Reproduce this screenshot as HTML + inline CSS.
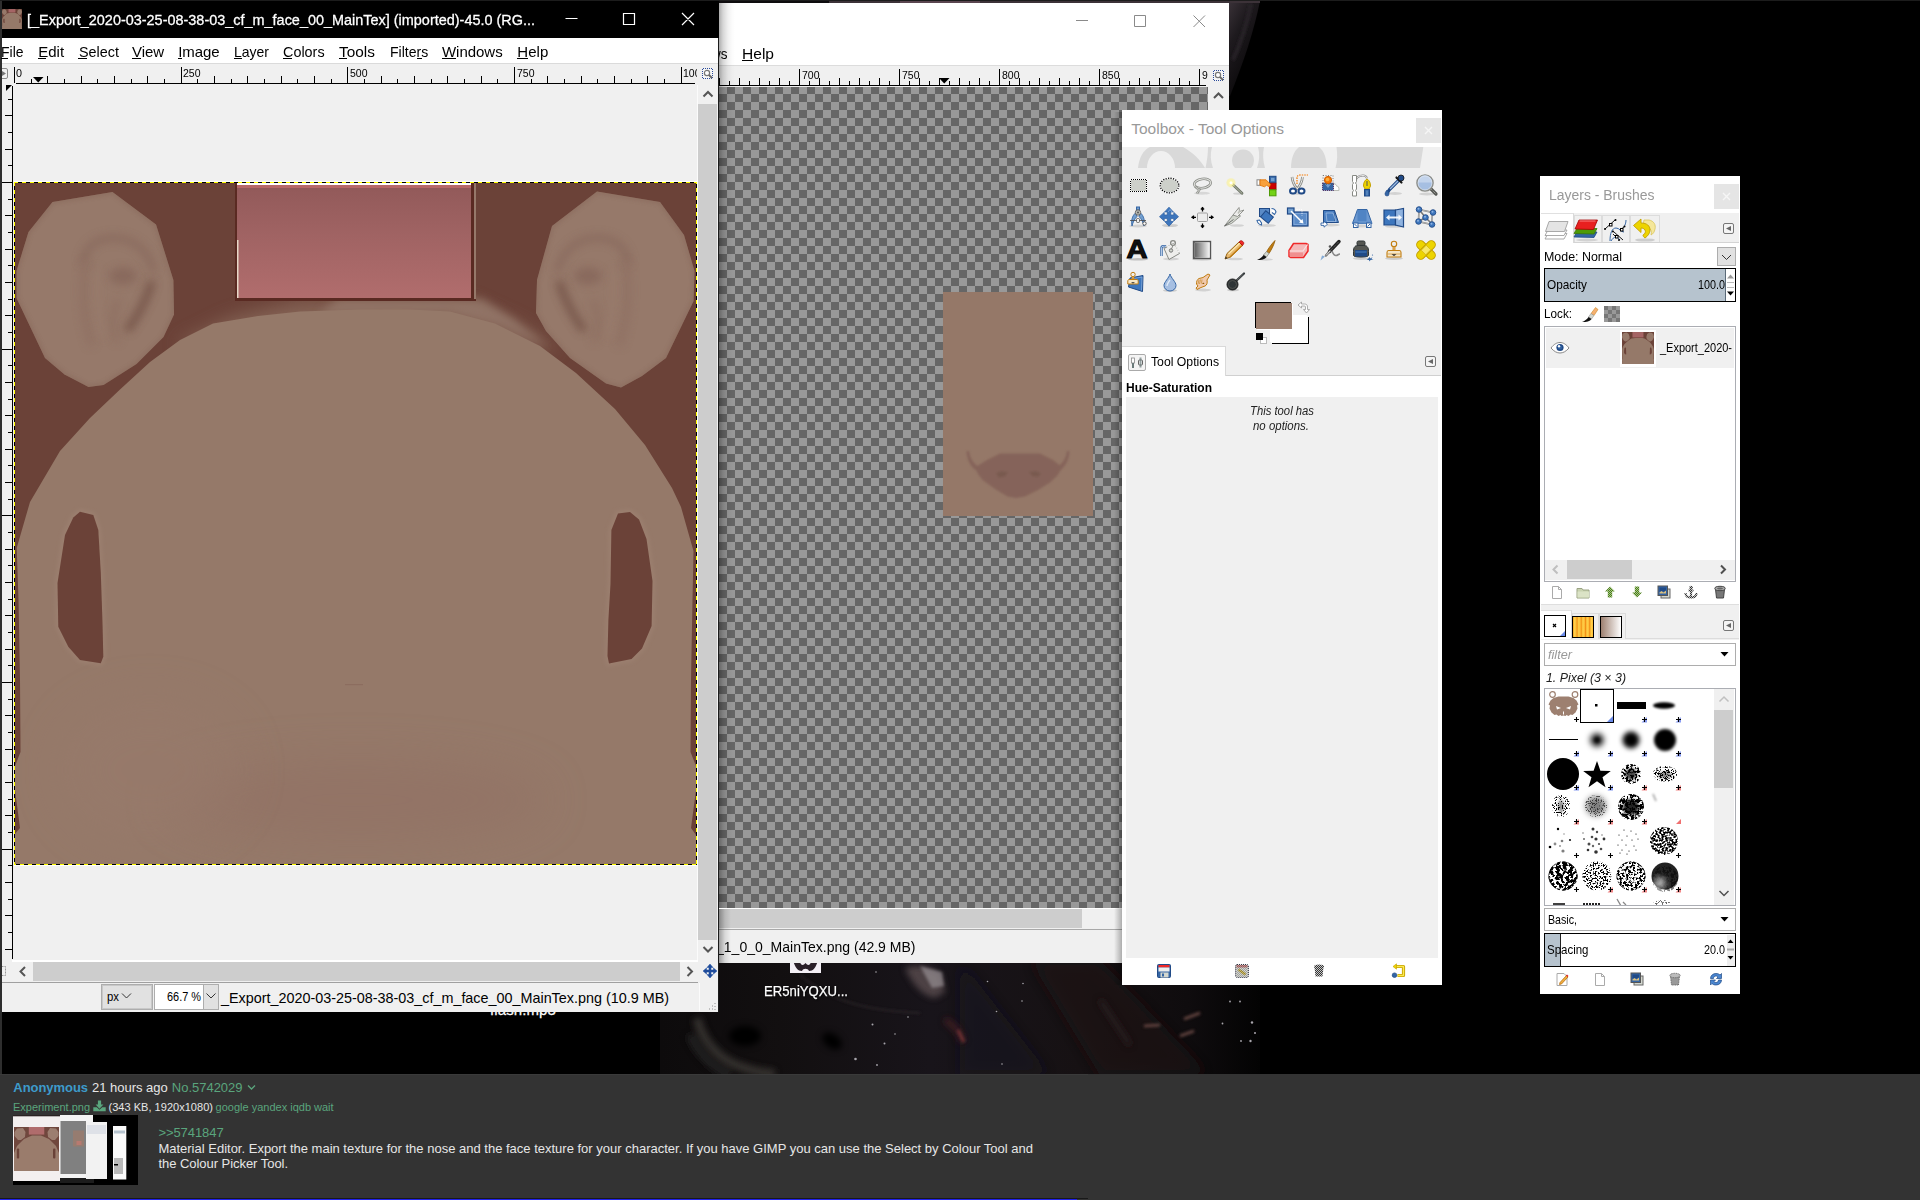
<!DOCTYPE html>
<html lang="en"><head><meta charset="utf-8"><title>Experiment.png</title><style>html,body{margin:0;padding:0;background:#000}
body{width:1920px;height:1200px;position:relative;overflow:hidden;font-family:"Liberation Sans",sans-serif}
.a{position:absolute;display:block}
.t{position:absolute;white-space:pre;line-height:1;transform-origin:0 0;display:block}
</style></head><body><svg width="0" height="0" style="position:absolute"><defs><g id="facemini"><path d="M14,866 L14,835 L20,828 L15,790 L15,766 L20.5,752 L20,680 L18.5,600 L16.7,548 L30,502 L60,451 L90,418 L120,389.5 L150,362 L180,340 L213,323.5 L258,316 L300,311.5 L360,309.5 L410,309.5 L450,311.5 L495,323.5 L540,346 L576,373 L615,409 L645,445 L672,488 L681,507 L693.5,551 L692.5,600 L691,680 L690.5,752 L696,766 L696,790 L691,828 L696,835 L697,866 Z" fill="#957969"/><polygon points="112.5,192 52.5,202 28.5,232 16.5,271 16.5,298 45,358 64.5,374.5 88.5,387 103.5,385 136.5,364 163.5,337 174,314.5 173.4,280 156,224.5 144,215.5" fill="#96796a"/><polygon points="597,191.5 660,202 684,235 694.5,271 693.6,301 666,358 642,376 621,387.4 606,383.5 570,358 546,331 536,313 537,280 552,226" fill="#96796a"/><polygon points="80,511.7 93.3,515 98.3,530 100.8,573 102.5,623 103.3,656.7 100.8,663.3 80,660 68.3,646.7 58.3,626.7 57.5,583 65,535 73.3,517.5" fill="#6b4238"/><polygon points="618,513.5 630,512 639,519.5 646.5,539 652.5,581 651.6,626 642,648.5 631.5,659 609,663.5 607.5,656 608.4,620 610.5,584 611.4,530" fill="#6b4238"/><rect x="237" y="183" width="236" height="116" fill="#a56565"/></g></defs></svg>
<!-- desk --><div class="a" style="left:0px;top:0px;width:2px;height:1074px;background:#2e2e2e;"></div><div class="a" style="left:0px;top:0px;width:1920px;height:1px;background:#1c1c1c;"></div><svg class="a" style="left:660px;top:1px;" width="600" height="1074" viewBox="660 1 600 1074"><defs><filter id="wb" x="-20%" y="-20%" width="140%" height="140%"><feGaussianBlur stdDeviation="3"/></filter><filter id="wb2" x="-20%" y="-20%" width="140%" height="140%"><feGaussianBlur stdDeviation="1.5"/></filter><filter id="wb3" x="-20%" y="-20%" width="140%" height="140%"><feGaussianBlur stdDeviation="8"/></filter><linearGradient id="wg" x1="0" y1="0" x2="1" y2="0"><stop offset="0" stop-color="#0d0b0c"/><stop offset="0.2" stop-color="#120f10"/><stop offset="0.45" stop-color="#18141a"/><stop offset="0.7" stop-color="#161113"/><stop offset="0.88" stop-color="#0f0c0e"/><stop offset="1" stop-color="#030303"/></linearGradient></defs><rect x="660" y="940" width="600" height="135" fill="url(#wg)"/><linearGradient id="wt" x1="0" y1="0" x2="0.6" y2="1"><stop offset="0" stop-color="#3a3238"/><stop offset="0.35" stop-color="#1e1a1e"/><stop offset="1" stop-color="#050405"/></linearGradient><path d="M1229,1h31c-6,30 -16,60 -30,95h-1z" fill="url(#wt)"/><path d="M1233,60c8,-18 14,-36 18,-56" stroke="#2c262c" stroke-width="3" fill="none" filter="url(#wb2)"/><g filter="url(#wb3)"><path d="M960,960l90,115h-90z" fill="#1a1a24" opacity="0.5"/><path d="M1030,960h70l110,115h-110z" fill="#1a1517" opacity="0.6"/></g><g filter="url(#wb)"><path d="M697,1018c5,22 20,40 42,48c12,5 24,7 36,8" stroke="#3a3533" stroke-width="9" fill="none" opacity="0.85"/><path d="M690,1035c8,18 22,32 40,40" stroke="#242021" stroke-width="8" fill="none"/><ellipse cx="832" cy="1041" rx="11" ry="7" fill="#000" transform="rotate(35 832 1041)"/><ellipse cx="745" cy="1036" rx="16" ry="10" fill="#060505"/><path d="M1100,1000l30,45" stroke="#2a2024" stroke-width="4" fill="none"/><path d="M905,968c12,-4 26,-2 36,6l4,18l-10,6c-12,-2 -22,-12 -30,-30z" fill="#5a4c50" opacity="0.8"/><path d="M945,1020c8,4 14,10 18,22" stroke="#4a2224" stroke-width="6" fill="none" opacity="0.8"/></g><g filter="url(#wb2)"><path d="M920,966l22,6l2,14l-12,2z" fill="#a49ca0" opacity="0.6"/><path d="M1144,1026l16,-1M1184,1019l16,-6M1180,1036l14,-5" stroke="#6a4a44" stroke-width="2.500"/><path d="M958,1030l6,12" stroke="#8a3a3a" stroke-width="3" opacity="0.7"/><path d="M800,975c30,25 60,35 120,38" stroke="#3a3236" stroke-width="1" fill="none"/></g><g fill="#a8a6ac"><circle cx="872.500" cy="1024.500" r="1"/><circle cx="855.500" cy="1059" r="1.300"/><circle cx="884.500" cy="1043.500" r="1"/><circle cx="895" cy="1034" r="0.800"/><circle cx="877" cy="1065" r="0.900"/><circle cx="987.500" cy="981.500" r="0.800"/><circle cx="1023" cy="983.500" r="0.800"/><circle cx="1022" cy="1001" r="0.800"/><circle cx="996.500" cy="1011.500" r="0.800"/><circle cx="1002" cy="1064" r="0.800"/><circle cx="1230" cy="1001.500" r="0.900"/><circle cx="1240" cy="1001.500" r="0.900"/><circle cx="1252" cy="1022.500" r="1.200"/><circle cx="1255" cy="1033" r="1"/><circle cx="1250.500" cy="1041" r="1.200"/><circle cx="1241" cy="1041" r="0.900"/><circle cx="1222.500" cy="1023.500" r="0.900"/><circle cx="876" cy="972" r="0.800"/><circle cx="908" cy="1017" r="0.800"/></g><path d="M719,1h541v2h-541z" fill="#3c3238"/><path d="M719,1h110v2h-110z" fill="#0e0c0e"/><path d="M900,1h80v2h-80z" fill="#5a4650"/></svg><div class="a" style="left:790px;top:960px;width:31px;height:13px;background:#f4f0f6;"></div><svg class="a" style="left:790px;top:960px;" width="31" height="13" viewBox="0 0 31 13"><path d="M3,0c2,8 5,11 9,11c1,-3 6,-3 7,0c4,0 7,-3 9,-11h-6c-2,6 -4,6 -6.500,3c-2.500,3 -4.500,3 -6.500,-3z" fill="#2a2028"/></svg><span class="t" style="left:764px;top:982.68px;font-size:15.5px;color:#fff;transform:scaleX(0.8479);-webkit-text-stroke:0.25px #fff;text-shadow:1px 1px 2px #000">ER5niYQXU...</span><span class="t" style="left:490px;top:1001.80px;font-size:15px;color:#fff;letter-spacing:0.106px;-webkit-text-stroke:0.25px #fff;">flash.mp3</span>
<!-- win1 --><div class="a" style="left:2px;top:1px;width:717px;height:1011px;background:#f0f0f0;"></div><div class="a" style="left:2px;top:1px;width:717px;height:37px;background:#000;"></div><div class="a" style="left:2px;top:38px;width:716px;height:25px;background:#fff;"></div><div class="a" style="left:2px;top:63px;width:716px;height:1px;background:#dadada;"></div><div class="a" style="left:718px;top:38px;width:1px;height:974px;background:#1b1b1b;"></div><svg class="a" style="left:2px;top:9px;" width="20" height="20" viewBox="14 182 684 685"><rect x="14" y="182" width="684" height="685" fill="#6b4238"/><use href="#facemini"/></svg><span class="t" style="left:27px;top:12.08px;font-size:15.5px;color:#fff;transform:scaleX(0.9315);-webkit-text-stroke:0.3px #fff;">[_Export_2020-03-25-08-38-03_cf_m_face_00_MainTex] (imported)-45.0 (RG...</span><svg class="a" style="left:560px;top:8px;" width="140" height="24" viewBox="0 0 140 24"><path d="M5.5,10.5h12M63.5,5.5h11v11h-11zM122,5l12,12M134,5l-12,12" stroke="#fff" stroke-width="1.2" fill="none"/></svg><span class="t" style="left:1px;top:43.70px;font-size:15px;color:#000;transform:scaleX(0.9308);">File</span><div class="a" style="left:1px;top:58px;width:7px;height:1px;background:#000;"></div><span class="t" style="left:38.2px;top:43.70px;font-size:15px;color:#000;letter-spacing:0.035px;">Edit</span><div class="a" style="left:38px;top:58px;width:8px;height:1px;background:#000;"></div><span class="t" style="left:78.5px;top:43.70px;font-size:15px;color:#000;transform:scaleX(0.9568);">Select</span><div class="a" style="left:78px;top:58px;width:9px;height:1px;background:#000;"></div><span class="t" style="left:132px;top:43.70px;font-size:15px;color:#000;letter-spacing:-0.062px;">View</span><div class="a" style="left:132px;top:58px;width:9px;height:1px;background:#000;"></div><span class="t" style="left:178.2px;top:43.70px;font-size:15px;color:#000;letter-spacing:-0.081px;">Image</span><div class="a" style="left:178px;top:58px;width:4px;height:1px;background:#000;"></div><span class="t" style="left:234px;top:43.70px;font-size:15px;color:#000;transform:scaleX(0.9326);">Layer</span><div class="a" style="left:234px;top:58px;width:8px;height:1px;background:#000;"></div><span class="t" style="left:283.1px;top:43.70px;font-size:15px;color:#000;transform:scaleX(0.9594);">Colors</span><div class="a" style="left:283px;top:58px;width:9px;height:1px;background:#000;"></div><span class="t" style="left:338.8px;top:43.70px;font-size:15px;color:#000;transform:scaleX(1.0248);">Tools</span><div class="a" style="left:339px;top:58px;width:8px;height:1px;background:#000;"></div><span class="t" style="left:389.6px;top:43.70px;font-size:15px;color:#000;transform:scaleX(0.9353);">Filters</span><div class="a" style="left:417px;top:58px;width:5px;height:1px;background:#000;"></div><span class="t" style="left:442px;top:43.70px;font-size:15px;color:#000;letter-spacing:-0.037px;">Windows</span><div class="a" style="left:442px;top:58px;width:14px;height:1px;background:#000;"></div><span class="t" style="left:517.2px;top:43.70px;font-size:15px;color:#000;letter-spacing:0.110px;">Help</span><div class="a" style="left:517px;top:58px;width:11px;height:1px;background:#000;"></div><svg class="a" style="left:0px;top:60px;" width="720" height="30" viewBox="0 60 720 30"><rect x="16" y="83" width="679" height="1" fill="#000"/><rect x="14" y="67" width="1" height="16" fill="#000"/><rect x="31" y="79" width="1" height="4" fill="#000"/><rect x="47" y="76" width="1" height="7" fill="#000"/><rect x="64" y="79" width="1" height="4" fill="#000"/><rect x="81" y="76" width="1" height="7" fill="#000"/><rect x="97" y="79" width="1" height="4" fill="#000"/><rect x="114" y="76" width="1" height="7" fill="#000"/><rect x="131" y="79" width="1" height="4" fill="#000"/><rect x="147" y="76" width="1" height="7" fill="#000"/><rect x="164" y="79" width="1" height="4" fill="#000"/><rect x="181" y="67" width="1" height="16" fill="#000"/><rect x="197" y="79" width="1" height="4" fill="#000"/><rect x="214" y="76" width="1" height="7" fill="#000"/><rect x="231" y="79" width="1" height="4" fill="#000"/><rect x="247" y="76" width="1" height="7" fill="#000"/><rect x="264" y="79" width="1" height="4" fill="#000"/><rect x="281" y="76" width="1" height="7" fill="#000"/><rect x="297" y="79" width="1" height="4" fill="#000"/><rect x="314" y="76" width="1" height="7" fill="#000"/><rect x="331" y="79" width="1" height="4" fill="#000"/><rect x="347" y="67" width="1" height="16" fill="#000"/><rect x="364" y="79" width="1" height="4" fill="#000"/><rect x="381" y="76" width="1" height="7" fill="#000"/><rect x="397" y="79" width="1" height="4" fill="#000"/><rect x="414" y="76" width="1" height="7" fill="#000"/><rect x="431" y="79" width="1" height="4" fill="#000"/><rect x="447" y="76" width="1" height="7" fill="#000"/><rect x="464" y="79" width="1" height="4" fill="#000"/><rect x="481" y="76" width="1" height="7" fill="#000"/><rect x="497" y="79" width="1" height="4" fill="#000"/><rect x="514" y="67" width="1" height="16" fill="#000"/><rect x="531" y="79" width="1" height="4" fill="#000"/><rect x="547" y="76" width="1" height="7" fill="#000"/><rect x="564" y="79" width="1" height="4" fill="#000"/><rect x="581" y="76" width="1" height="7" fill="#000"/><rect x="597" y="79" width="1" height="4" fill="#000"/><rect x="614" y="76" width="1" height="7" fill="#000"/><rect x="631" y="79" width="1" height="4" fill="#000"/><rect x="647" y="76" width="1" height="7" fill="#000"/><rect x="664" y="79" width="1" height="4" fill="#000"/><rect x="681" y="67" width="1" height="16" fill="#000"/></svg><span class="t" style="left:15.5px;top:68.47px;font-size:11.5px;color:#000;transform:scaleX(0.9366);">0</span><span class="t" style="left:182.5px;top:68.47px;font-size:11.5px;color:#000;transform:scaleX(0.9121);">250</span><span class="t" style="left:349.5px;top:68.47px;font-size:11.5px;color:#000;transform:scaleX(0.9121);">500</span><span class="t" style="left:516.5px;top:68.47px;font-size:11.5px;color:#000;transform:scaleX(0.9121);">750</span><div class="a" style="left:682.2px;top:66px;width:14.8px;height:16px;overflow:hidden"><span class="t" style="left:0.5px;top:2.47px;font-size:11.5px;color:#000;transform:scaleX(0.9104);">1000</span></div><svg class="a" style="left:32px;top:76px;" width="13" height="7" viewBox="0 0 13 7"><path d="M1,1h10.5l-5.25,5.5z" fill="#000"/></svg><svg class="a" style="left:2px;top:66px;" width="12" height="16" viewBox="0 0 12 16"><rect x="-3.5" y="2.5" width="9" height="10" rx="1.5" fill="#f0f0f0" stroke="#8a8a8a"/><path d="M0,5l4,2.5l-4,2.5z" fill="#777"/></svg><svg class="a" style="left:0px;top:84px;" width="14" height="880" viewBox="0 84 14 880"><rect x="12" y="86" width="1" height="873" fill="#000"/><path d="M6,85h6l-6,6z" fill="#000"/><rect x="8" y="99" width="4" height="1" fill="#000"/><rect x="5" y="115" width="7" height="1" fill="#000"/><rect x="8" y="132" width="4" height="1" fill="#000"/><rect x="5" y="149" width="7" height="1" fill="#000"/><rect x="8" y="165" width="4" height="1" fill="#000"/><rect x="2" y="182" width="10" height="1" fill="#000"/><rect x="8" y="199" width="4" height="1" fill="#000"/><rect x="5" y="215" width="7" height="1" fill="#000"/><rect x="8" y="232" width="4" height="1" fill="#000"/><rect x="5" y="249" width="7" height="1" fill="#000"/><rect x="8" y="265" width="4" height="1" fill="#000"/><rect x="5" y="282" width="7" height="1" fill="#000"/><rect x="8" y="299" width="4" height="1" fill="#000"/><rect x="5" y="315" width="7" height="1" fill="#000"/><rect x="8" y="332" width="4" height="1" fill="#000"/><rect x="2" y="349" width="10" height="1" fill="#000"/><rect x="8" y="365" width="4" height="1" fill="#000"/><rect x="5" y="382" width="7" height="1" fill="#000"/><rect x="8" y="399" width="4" height="1" fill="#000"/><rect x="5" y="415" width="7" height="1" fill="#000"/><rect x="8" y="432" width="4" height="1" fill="#000"/><rect x="5" y="449" width="7" height="1" fill="#000"/><rect x="8" y="465" width="4" height="1" fill="#000"/><rect x="5" y="482" width="7" height="1" fill="#000"/><rect x="8" y="499" width="4" height="1" fill="#000"/><rect x="2" y="515" width="10" height="1" fill="#000"/><rect x="8" y="532" width="4" height="1" fill="#000"/><rect x="5" y="549" width="7" height="1" fill="#000"/><rect x="8" y="565" width="4" height="1" fill="#000"/><rect x="5" y="582" width="7" height="1" fill="#000"/><rect x="8" y="599" width="4" height="1" fill="#000"/><rect x="5" y="615" width="7" height="1" fill="#000"/><rect x="8" y="632" width="4" height="1" fill="#000"/><rect x="5" y="649" width="7" height="1" fill="#000"/><rect x="8" y="665" width="4" height="1" fill="#000"/><rect x="2" y="682" width="10" height="1" fill="#000"/><rect x="8" y="699" width="4" height="1" fill="#000"/><rect x="5" y="715" width="7" height="1" fill="#000"/><rect x="8" y="732" width="4" height="1" fill="#000"/><rect x="5" y="749" width="7" height="1" fill="#000"/><rect x="8" y="765" width="4" height="1" fill="#000"/><rect x="5" y="782" width="7" height="1" fill="#000"/><rect x="8" y="799" width="4" height="1" fill="#000"/><rect x="5" y="815" width="7" height="1" fill="#000"/><rect x="8" y="832" width="4" height="1" fill="#000"/><rect x="2" y="849" width="10" height="1" fill="#000"/><rect x="8" y="865" width="4" height="1" fill="#000"/><rect x="5" y="882" width="7" height="1" fill="#000"/><rect x="8" y="899" width="4" height="1" fill="#000"/><rect x="5" y="915" width="7" height="1" fill="#000"/><rect x="8" y="932" width="4" height="1" fill="#000"/><rect x="5" y="949" width="7" height="1" fill="#000"/></svg><svg class="a" style="left:14px;top:181px;" width="684" height="686" viewBox="14 181 684 686"><defs><filter id="b2" filterUnits="userSpaceOnUse" x="-40" y="120" width="800" height="800"><feGaussianBlur stdDeviation="2"/></filter><filter id="b4" filterUnits="userSpaceOnUse" x="-40" y="120" width="800" height="800"><feGaussianBlur stdDeviation="4"/></filter><filter id="b8" filterUnits="userSpaceOnUse" x="-40" y="120" width="800" height="800"><feGaussianBlur stdDeviation="9"/></filter><filter id="b20" filterUnits="userSpaceOnUse" x="-40" y="120" width="800" height="800"><feGaussianBlur stdDeviation="22"/></filter><linearGradient id="pk" x1="0" y1="0" x2="0" y2="1"><stop offset="0" stop-color="#915959"/><stop offset="0.45" stop-color="#a06363"/><stop offset="1" stop-color="#b16d6d"/></linearGradient><clipPath id="fc"><rect x="15" y="183" width="682" height="682"/></clipPath></defs><g clip-path="url(#fc)"><rect x="14" y="182" width="684" height="685" fill="#6b4238"/><path d="M175,345 L230,318 L300,300 L410,300 L470,302 L520,325 L560,350 L520,350 L200,350Z" fill="#8a6a5c" opacity="0.8" filter="url(#b8)"/><path d="M318,314 L338,299 L482,299 L512,318 L548,348 L500,326 L450,313 Z" fill="#94786a" opacity="0.85" filter="url(#b4)"/><path d="M14,866 L14,835 L20,828 L15,790 L15,766 L20.5,752 L20,680 L18.5,600 L16.7,548 L30,502 L60,451 L90,418 L120,389.5 L150,362 L180,340 L213,323.5 L258,316 L300,311.5 L360,309.5 L410,309.5 L450,311.5 L495,323.5 L540,346 L576,373 L615,409 L645,445 L672,488 L681,507 L693.5,551 L692.5,600 L691,680 L690.5,752 L696,766 L696,790 L691,828 L696,835 L697,866 Z" fill="#957969"/><ellipse cx="356" cy="800" rx="190" ry="40" fill="#916f63" opacity="0.55" filter="url(#b20)"/><ellipse cx="150" cy="770" rx="90" ry="70" fill="#987a6c" opacity="0.5" filter="url(#b20)"/><clipPath id="ecl"><polygon points="112.5,192 52.5,202 28.5,232 16.5,271 16.5,298 45,358 64.5,374.5 88.5,387 103.5,385 136.5,364 163.5,337 174,314.5 173.4,280 156,224.5 144,215.5"/></clipPath><clipPath id="ecr"><polygon points="597,191.5 660,202 684,235 694.5,271 693.6,301 666,358 642,376 621,387.4 606,383.5 570,358 546,331 536,313 537,280 552,226"/></clipPath><polygon points="112.5,192 52.5,202 28.5,232 16.5,271 16.5,298 45,358 64.5,374.5 88.5,387 103.5,385 136.5,364 163.5,337 174,314.5 173.4,280 156,224.5 144,215.5" fill="#96796a"/><g clip-path="url(#ecl)"><polygon points="112.5,192 52.5,202 28.5,232 16.5,271 16.5,298 45,358 64.5,374.5 88.5,387 103.5,385 136.5,364 163.5,337 174,314.5 173.4,280 156,224.5 144,215.5" fill="none" stroke="#87675a" stroke-width="3" opacity="0.75" filter="url(#b2)"/><g><path d="M83,264C84,248 95,239 111,238C130,237 148,247 154,272" fill="none" stroke="#87675b" stroke-width="7" opacity="0.75" filter="url(#b4)"/><path d="M85,262C81,290 83,320 92,346" fill="none" stroke="#8b6b5e" stroke-width="6" opacity="0.6" filter="url(#b4)"/><ellipse cx="123" cy="276" rx="14" ry="9" fill="#87675b" opacity="0.85" filter="url(#b4)"/><path d="M152,281C148,296 140,313 127,331" fill="none" stroke="#76544a" stroke-width="8" opacity="0.9" filter="url(#b4)"/><path d="M118,300C112,315 112,330 118,342" fill="none" stroke="#8a6a5d" stroke-width="6" opacity="0.6" filter="url(#b4)"/><path d="M98,268C94,290 96,315 104,338" fill="none" stroke="#9c7f70" stroke-width="4" opacity="0.5" filter="url(#b4)"/></g></g><polygon points="597,191.5 660,202 684,235 694.5,271 693.6,301 666,358 642,376 621,387.4 606,383.5 570,358 546,331 536,313 537,280 552,226" fill="#96796a"/><g clip-path="url(#ecr)"><polygon points="597,191.5 660,202 684,235 694.5,271 693.6,301 666,358 642,376 621,387.4 606,383.5 570,358 546,331 536,313 537,280 552,226" fill="none" stroke="#87675a" stroke-width="3" opacity="0.75" filter="url(#b2)"/><g transform="translate(711,0) scale(-1,1)"><path d="M83,264C84,248 95,239 111,238C130,237 148,247 154,272" fill="none" stroke="#87675b" stroke-width="7" opacity="0.75" filter="url(#b4)"/><path d="M85,262C81,290 83,320 92,346" fill="none" stroke="#8b6b5e" stroke-width="6" opacity="0.6" filter="url(#b4)"/><ellipse cx="123" cy="276" rx="14" ry="9" fill="#87675b" opacity="0.85" filter="url(#b4)"/><path d="M152,281C148,296 140,313 127,331" fill="none" stroke="#76544a" stroke-width="8" opacity="0.9" filter="url(#b4)"/><path d="M118,300C112,315 112,330 118,342" fill="none" stroke="#8a6a5d" stroke-width="6" opacity="0.6" filter="url(#b4)"/><path d="M98,268C94,290 96,315 104,338" fill="none" stroke="#9c7f70" stroke-width="4" opacity="0.5" filter="url(#b4)"/></g></g><polygon points="80,511.7 93.3,515 98.3,530 100.8,573 102.5,623 103.3,656.7 100.8,663.3 80,660 68.3,646.7 58.3,626.7 57.5,583 65,535 73.3,517.5" fill="none" stroke="#a08474" stroke-width="5" opacity="0.6" filter="url(#b2)"/><polygon points="618,513.5 630,512 639,519.5 646.5,539 652.5,581 651.6,626 642,648.5 631.5,659 609,663.5 607.5,656 608.4,620 610.5,584 611.4,530" fill="none" stroke="#a08474" stroke-width="5" opacity="0.6" filter="url(#b2)"/><polygon points="80,511.7 93.3,515 98.3,530 100.8,573 102.5,623 103.3,656.7 100.8,663.3 80,660 68.3,646.7 58.3,626.7 57.5,583 65,535 73.3,517.5" fill="#6b4238"/><polygon points="618,513.5 630,512 639,519.5 646.5,539 652.5,581 651.6,626 642,648.5 631.5,659 609,663.5 607.5,656 608.4,620 610.5,584 611.4,530" fill="#6b4238"/><rect x="235" y="183" width="241" height="118" fill="#5a2a22"/><rect x="474" y="183" width="2" height="116" fill="#96786a"/><rect x="237" y="183" width="234" height="115" fill="url(#pk)"/><rect x="237" y="183" width="234" height="2" fill="#fff"/><rect x="237" y="185" width="234" height="3" fill="#c06c6c" opacity="0.8"/><rect x="237" y="240" width="1.5" height="58" fill="#e8d8c8"/><rect x="345" y="684" width="18" height="1.2" fill="#8a6a5c" opacity="0.8"/></g><rect x="14" y="181" width="684" height="1" fill="#fff"/><rect x="14" y="865" width="684" height="1" fill="#fff"/><rect x="14.5" y="182.5" width="682" height="682" fill="none" stroke="#000" stroke-width="1"/><g stroke="#ffff00" stroke-width="1" stroke-dasharray="4 4" fill="none"><path d="M14,182.5H697" stroke-dashoffset="0"/><path d="M14,864.5H697" stroke-dashoffset="2"/><path d="M696.5,182V865" stroke-dashoffset="2"/><path d="M14.5,182V865" stroke-dashoffset="0"/></g></svg><div class="a" style="left:697px;top:85px;width:1px;height:876px;background:#fbfbfb;"></div><div class="a" style="left:698px;top:85px;width:20px;height:875px;background:#f0f0f0;"></div><div class="a" style="left:698px;top:104px;width:19px;height:836px;background:#cdcdcd;"></div><svg class="a" style="left:698px;top:85px;" width="20" height="19" viewBox="0 0 20 19"><path d="M5.5,11.5l4.5,-4.5l4.5,4.5" stroke="#555" stroke-width="2" fill="none"/></svg><svg class="a" style="left:698px;top:940px;" width="20" height="19" viewBox="0 0 20 19"><path d="M5.5,7l4.5,4.5l4.5,-4.5" stroke="#555" stroke-width="2" fill="none"/></svg><svg class="a" style="left:698px;top:66px;" width="20" height="18" viewBox="0 0 20 18"><rect x="4.500" y="2.500" width="10" height="10" fill="#f6f6f6"/><path d="M4.500,2.500h10M4.500,12.500h10M4.500,2.500v10M14.500,2.500v10" stroke="#2a4a9a" stroke-width="1" stroke-dasharray="1 1" fill="none" shape-rendering="crispEdges"/><circle cx="9" cy="7" r="2.600" fill="#fff" stroke="#777" stroke-width="1.200"/><path d="M11,9l3,3" stroke="#666" stroke-width="1.800"/></svg><div class="a" style="left:12px;top:960px;width:686px;height:2px;background:#fff;"></div><div class="a" style="left:2px;top:962px;width:716px;height:20px;background:#f0f0f0;"></div><div class="a" style="left:33px;top:962px;width:647px;height:19px;background:#cdcdcd;"></div><svg class="a" style="left:14px;top:962px;" width="19" height="19" viewBox="0 0 19 19"><path d="M11,5l-4.5,4.5l4.5,4.5" stroke="#555" stroke-width="2" fill="none"/></svg><svg class="a" style="left:680px;top:962px;" width="19" height="19" viewBox="0 0 19 19"><path d="M7.5,5l4.5,4.5l-4.5,4.5" stroke="#555" stroke-width="2" fill="none"/></svg><svg class="a" style="left:2px;top:964px;" width="8" height="14" viewBox="0 0 8 14"><rect x="-3.5" y="2.5" width="7" height="9" fill="none" stroke="#999" stroke-dasharray="2 1"/></svg><svg class="a" style="left:702px;top:963px;" width="16" height="16" viewBox="0 0 16 16"><path d="M8,1l3,3.5h-2v2.5h2.5v-2l3.5,3l-3.5,3v-2h-2.5v2.5h2l-3,3.5l-3,-3.5h2v-2.5h-2.5v2l-3.500,-3l3.5,-3v2h2.5v-2.5h-2z" fill="#1f4c9c" stroke="#1f4c9c" stroke-width="0.5"/></svg><div class="a" style="left:2px;top:982px;width:696px;height:1px;background:#a0a0a0;"></div><div class="a" style="left:2px;top:983px;width:716px;height:29px;background:#f0f0f0;"></div><div class="a" style="left:699px;top:983px;width:1px;height:28px;background:#fbfbfb;"></div><div class="a" style="left:101px;top:984px;width:52px;height:26px;background:#e1e1e1;border:1px solid #adadad;box-sizing:border-box;box-shadow:inset 0 0 0 1px #c8c8c8"></div><span class="t" style="left:106.5px;top:990.07px;font-size:13.5px;color:#000;transform:scaleX(0.8412);">px</span><svg class="a" style="left:120px;top:990px;" width="14" height="12" viewBox="0 0 14 12"><path d="M2,3.500l4.500,4.500l4.500,-4.500" stroke="#333" stroke-width="1" fill="none"/></svg><div class="a" style="left:154px;top:984px;width:65px;height:26px;background:#fff;border:1px solid #adadad;box-sizing:border-box"></div><div class="a" style="left:203px;top:985px;width:15px;height:24px;background:#e1e1e1;border-left:1px solid #adadad;box-sizing:border-box"></div><span class="t" style="left:167px;top:991.42px;font-size:12.5px;color:#000;transform:scaleX(0.8735);">66.7 %</span><svg class="a" style="left:204px;top:990px;" width="14" height="12" viewBox="0 0 14 12"><path d="M2.500,3.500l4.500,4.500l4.500,-4.500" stroke="#333" stroke-width="1" fill="none"/></svg><span class="t" style="left:221px;top:989.80px;font-size:15px;color:#000;transform:scaleX(0.9577);">_Export_2020-03-25-08-38-03_cf_m_face_00_MainTex.png (10.9 MB)</span><svg class="a" style="left:705px;top:1000px;" width="12" height="12" viewBox="0 0 12 12"><path d="M10,3v1M7,6h1M10,6v1M4,9h1M7,9h1M10,9v1" stroke="#b0b0b0" stroke-width="1.5"/></svg>
<!-- win2 --><div class="a" style="left:719px;top:3px;width:510px;height:960px;background:#f0f0f0;"></div><div class="a" style="left:719px;top:3px;width:510px;height:62px;background:#fff;"></div><div class="a" style="left:719px;top:65px;width:510px;height:1px;background:#dcdcdc;"></div><svg class="a" style="left:1070px;top:10px;" width="140" height="24" viewBox="0 0 140 24"><path d="M6,10.500h12M64.500,5.500h11v11h-11zM123.500,5.500l11.500,11.500M135,5.500l-11.500,11.500" stroke="#8a8a8a" stroke-width="1" fill="none"/></svg><div class="a" style="left:719px;top:40px;width:20px;height:24px;overflow:hidden"><span class="t" style="left:-8px;top:5.80px;font-size:15px;color:#000;transform:scaleX(0.8995);">ws</span></div><span class="t" style="left:742px;top:45.80px;font-size:15px;color:#000;transform:scaleX(1.0370);">Help</span><div class="a" style="left:742px;top:60px;width:11px;height:1px;background:#000;"></div><svg class="a" style="left:719px;top:66px;" width="489" height="21" viewBox="719 66 489 21"><rect x="719" y="85" width="487" height="1" fill="#000"/><rect x="719" y="78" width="1" height="7" fill="#000"/><rect x="729" y="81" width="1" height="4" fill="#000"/><rect x="739" y="78" width="1" height="7" fill="#000"/><rect x="749" y="81" width="1" height="4" fill="#000"/><rect x="759" y="78" width="1" height="7" fill="#000"/><rect x="769" y="81" width="1" height="4" fill="#000"/><rect x="779" y="78" width="1" height="7" fill="#000"/><rect x="789" y="81" width="1" height="4" fill="#000"/><rect x="799" y="69" width="1" height="16" fill="#000"/><rect x="809" y="81" width="1" height="4" fill="#000"/><rect x="819" y="78" width="1" height="7" fill="#000"/><rect x="829" y="81" width="1" height="4" fill="#000"/><rect x="839" y="78" width="1" height="7" fill="#000"/><rect x="849" y="81" width="1" height="4" fill="#000"/><rect x="859" y="78" width="1" height="7" fill="#000"/><rect x="869" y="81" width="1" height="4" fill="#000"/><rect x="879" y="78" width="1" height="7" fill="#000"/><rect x="889" y="81" width="1" height="4" fill="#000"/><rect x="899" y="69" width="1" height="16" fill="#000"/><rect x="909" y="81" width="1" height="4" fill="#000"/><rect x="919" y="78" width="1" height="7" fill="#000"/><rect x="929" y="81" width="1" height="4" fill="#000"/><rect x="939" y="78" width="1" height="7" fill="#000"/><rect x="949" y="81" width="1" height="4" fill="#000"/><rect x="959" y="78" width="1" height="7" fill="#000"/><rect x="969" y="81" width="1" height="4" fill="#000"/><rect x="979" y="78" width="1" height="7" fill="#000"/><rect x="989" y="81" width="1" height="4" fill="#000"/><rect x="999" y="69" width="1" height="16" fill="#000"/><rect x="1009" y="81" width="1" height="4" fill="#000"/><rect x="1019" y="78" width="1" height="7" fill="#000"/><rect x="1029" y="81" width="1" height="4" fill="#000"/><rect x="1039" y="78" width="1" height="7" fill="#000"/><rect x="1049" y="81" width="1" height="4" fill="#000"/><rect x="1059" y="78" width="1" height="7" fill="#000"/><rect x="1069" y="81" width="1" height="4" fill="#000"/><rect x="1079" y="78" width="1" height="7" fill="#000"/><rect x="1089" y="81" width="1" height="4" fill="#000"/><rect x="1099" y="69" width="1" height="16" fill="#000"/><rect x="1109" y="81" width="1" height="4" fill="#000"/><rect x="1119" y="78" width="1" height="7" fill="#000"/><rect x="1129" y="81" width="1" height="4" fill="#000"/><rect x="1139" y="78" width="1" height="7" fill="#000"/><rect x="1149" y="81" width="1" height="4" fill="#000"/><rect x="1159" y="78" width="1" height="7" fill="#000"/><rect x="1169" y="81" width="1" height="4" fill="#000"/><rect x="1179" y="78" width="1" height="7" fill="#000"/><rect x="1189" y="81" width="1" height="4" fill="#000"/><rect x="1199" y="69" width="1" height="16" fill="#000"/></svg><span class="t" style="left:801.5px;top:70.07px;font-size:11.5px;color:#000;transform:scaleX(0.9121);">700</span><span class="t" style="left:901.5px;top:70.07px;font-size:11.5px;color:#000;transform:scaleX(0.9121);">750</span><span class="t" style="left:1001.5px;top:70.07px;font-size:11.5px;color:#000;transform:scaleX(0.9121);">800</span><span class="t" style="left:1101.5px;top:70.07px;font-size:11.5px;color:#000;transform:scaleX(0.9121);">850</span><span class="t" style="left:1202px;top:70.07px;font-size:11.5px;color:#000;transform:scaleX(0.9054);">9</span><svg class="a" style="left:938px;top:77px;" width="13" height="8" viewBox="0 0 13 8"><path d="M1,1h10.500l-5.250,5.500z" fill="#000"/></svg><div class="a" style="left:719px;top:87px;width:489px;height:821px;background:#999;background-image:conic-gradient(#999 25%,#666 0 50%,#999 0 75%,#666 0);background-size:16px 16px;background-position:8px -1px"></div><svg class="a" style="left:943px;top:292px;" width="150" height="224" viewBox="0 0 150 224"><defs><filter id="nb" x="-20%" y="-20%" width="140%" height="140%"><feGaussianBlur stdDeviation="1.1"/></filter></defs><rect x="0" y="0" width="150" height="224" fill="#957868"/><g filter="url(#nb)"><path d="M32,175.500L44,168L57,161.500L97,161.500L110,168L119.500,175.500L114,184L107,190.500L95,198L82,204.500L73,206L64.500,204.500L52,197L39.500,188L35,182Z" fill="#85645a"/><path d="M23.500,159C24,167 27,174 32.500,178L35,174.500C30,171 27,166 26,159ZM126.500,159C126,167 123,174 117.500,178L115,174.500C120,171 123,166 124,159Z" fill="#85645a"/><path d="M53,181.500l5,-2.500l7,1l-3,4.500l-6,1zM86,180l7,-1l5,2.500l-3,3.500l-6,-1z" fill="#795a50"/></g></svg><div class="a" style="left:719px;top:3px;width:16px;height:960px;background:linear-gradient(90deg,rgba(0,0,0,0.32),rgba(0,0,0,0.16) 25%,rgba(0,0,0,0.06) 55%,rgba(0,0,0,0.015) 80%,rgba(0,0,0,0));"></div><div class="a" style="left:1208px;top:87px;width:21px;height:842px;background:#f0f0f0;"></div><svg class="a" style="left:1208px;top:87px;" width="21" height="20" viewBox="0 0 21 20"><path d="M6,11l4.500,-4.500l4.500,4.500" stroke="#555" stroke-width="2" fill="none"/></svg><svg class="a" style="left:1208px;top:66px;" width="21" height="20" viewBox="0 0 21 20"><rect x="5.500" y="4.500" width="10" height="10" fill="#f6f6f6"/><path d="M5.500,4.500h10M5.500,14.500h10M5.500,4.500v10M15.500,4.500v10" stroke="#2a4a9a" stroke-width="1" stroke-dasharray="1 1" fill="none" shape-rendering="crispEdges"/><circle cx="10" cy="9" r="2.600" fill="#fff" stroke="#777" stroke-width="1.200"/><path d="M12,11l3,3" stroke="#666" stroke-width="1.800"/></svg><div class="a" style="left:719px;top:908px;width:489px;height:1px;background:#fff;"></div><div class="a" style="left:719px;top:909px;width:489px;height:20px;background:#f0f0f0;"></div><div class="a" style="left:719px;top:909px;width:363px;height:19px;background:#cdcdcd;"></div><div class="a" style="left:719px;top:929px;width:510px;height:1px;background:#a8a8a8;"></div><div class="a" style="left:719px;top:930px;width:510px;height:33px;background:#f0f0f0;"></div><div class="a" style="left:719px;top:932px;width:300px;height:30px;overflow:hidden"><span class="t" style="left:-3.5px;top:7.30px;font-size:15px;color:#000;transform:scaleX(0.9346);">_1_0_0_MainTex.png (42.9 MB)</span></div><div class="a" style="left:719px;top:909px;width:12px;height:54px;background:linear-gradient(90deg,rgba(0,0,0,0.35),rgba(0,0,0,0.1) 50%,rgba(0,0,0,0));"></div>
<!-- toolbox --><div class="a" style="left:1114px;top:112px;width:8px;height:873px;background:linear-gradient(90deg,rgba(0,0,0,0),rgba(0,0,0,0.28));"></div><div class="a" style="left:1122px;top:110px;width:320px;height:875px;background:#fff;"></div><span class="t" style="left:1131.3px;top:121.18px;font-size:15.5px;color:#999;letter-spacing:-0.022px;">Toolbox - Tool Options</span><div class="a" style="left:1416px;top:118px;width:25px;height:25px;background:#e5e5e5;"></div><svg class="a" style="left:1416px;top:118px;" width="25" height="25" viewBox="0 0 25 25"><path d="M9,9l7,7M16,9l-7,7" stroke="#f6f6f6" stroke-width="1.400"/></svg><div class="a" style="left:1122px;top:147px;width:319px;height:228px;background:#f0f0f0;"></div><svg class="a" style="left:1122px;top:147px;" width="320" height="21" viewBox="0 0 320 21"><g fill="#d9d9d9"><path d="M16,21C17,11 21,3 28,0L61,0C70,5 78,12 83,21L53,21A14,17 0 0 0 25,21Z"/><path d="M83.500,21C85,14 86,7 86,0L90,0C88,7 88.500,14 91,21Z"/><circle cx="121" cy="13.500" r="11"/><path d="M135,21C137.500,14 138,7 136,0L142,0C140.500,7 141,14 143,21Z"/><path d="M169,21C169,11 172,4 177,0L197,0C202,4 204.700,11 204.700,21Z"/><path d="M214.500,0L301.300,0L298,21L213.500,21C215.500,14 215.500,7 214.500,0Z"/></g></svg><svg class="a" style="left:1126px;top:173px;overflow:visible;" width="24" height="24" viewBox="0 0 24 24"><rect x="4.500" y="6.500" width="16" height="12" fill="#cdd0ca"/><rect x="4.500" y="6.500" width="16" height="12" fill="none" stroke="#fff" stroke-width="1" shape-rendering="crispEdges"/><rect x="4.500" y="6.500" width="16" height="12" fill="none" stroke="#000" stroke-width="1" stroke-dasharray="1 1" shape-rendering="crispEdges"/></svg><svg class="a" style="left:1158px;top:173px;overflow:visible;" width="24" height="24" viewBox="0 0 24 24"><ellipse cx="11.500" cy="12.500" rx="9.300" ry="7.300" fill="#cdd0ca" stroke="#fff" stroke-width="1.300"/><ellipse cx="11.500" cy="12.500" rx="9.300" ry="7.300" fill="none" stroke="#000" stroke-width="1.300" stroke-dasharray="1.200 1.300"/></svg><svg class="a" style="left:1190px;top:173px;overflow:visible;" width="24" height="24" viewBox="0 0 24 24"><g transform="translate(0,0.7)"><ellipse cx="12" cy="19.500" rx="8" ry="1.500" fill="#000" opacity="0.1"/><ellipse cx="12.500" cy="9.800" rx="8.300" ry="4.600" fill="none" stroke="#8b8d88" stroke-width="2.600" transform="rotate(-8 12.500 9.800)"/><ellipse cx="12.500" cy="9.800" rx="8.300" ry="4.600" fill="none" stroke="#e3e4e0" stroke-width="1" transform="rotate(-8 12.500 9.800)"/><path d="M5,12.500c1.500,2 3,3 4.500,3.500c-1,1.500 -2,2.500 -2.500,4" fill="none" stroke="#8b8d88" stroke-width="2.400"/><path d="M5,12.500c1.500,2 3,3 4.500,3.500c-1,1.500 -2,2.500 -2.500,4" fill="none" stroke="#e3e4e0" stroke-width="0.800"/></g></svg><svg class="a" style="left:1222px;top:173px;overflow:visible;" width="24" height="24" viewBox="0 0 24 24"><g transform="translate(0,0.8)"><ellipse cx="16" cy="19.800" rx="5" ry="1.200" fill="#000" opacity="0.12"/><path d="M10.500,10.500l9.500,9" stroke="#6e7568" stroke-width="2.800" stroke-linecap="round"/><path d="M10.500,10.500l9.500,9" stroke="#b5bbaa" stroke-width="1" stroke-linecap="round"/><circle cx="9" cy="9" r="4.600" fill="#fbf08a" opacity="0.55"/><circle cx="9" cy="9" r="2.600" fill="#fdf6a8"/><circle cx="9" cy="9" r="1.500" fill="#fff"/></g></svg><svg class="a" style="left:1254px;top:173px;overflow:visible;" width="24" height="24" viewBox="0 0 24 24"><g transform="translate(-0.5,1.3)"><rect x="16" y="2" width="6.500" height="6.500" fill="#3465a4" stroke="#204a87"/><rect x="17.500" y="3.500" width="3.500" height="3.500" fill="#729fcf"/><rect x="16" y="9" width="6.500" height="6" fill="#cc0000" stroke="#a40000"/><rect x="16" y="15.500" width="6.500" height="6" fill="#73d216" stroke="#4e9a06"/><rect x="3.500" y="5.500" width="3" height="5.500" fill="#fff" stroke="#888"/><path d="M6.500,5.500l6,0l4.500,4.500l-1,2.500l-3,-1.500l-2,1.500l-4.500,-1.500z" fill="#f8a13c" stroke="#e07000" stroke-width="0.800"/></g></svg><svg class="a" style="left:1286px;top:173px;overflow:visible;" width="24" height="24" viewBox="0 0 24 24"><ellipse cx="11" cy="20.500" rx="7.500" ry="1.300" fill="#000" opacity="0.12"/><path d="M6,4c0.500,5 2.500,9 5.500,12M16.500,4c-0.500,5 -2.500,9 -5.500,12" fill="none" stroke="#888a85" stroke-width="2.600"/><path d="M6,4c0.500,5 2.500,9 5.500,12M16.500,4c-0.500,5 -2.500,9 -5.500,12" fill="none" stroke="#eeeeec" stroke-width="1"/><ellipse cx="7" cy="18" rx="3" ry="2.500" fill="#fff" stroke="#204a87" stroke-width="2"/><ellipse cx="15.500" cy="18" rx="3" ry="2.500" fill="#fff" stroke="#204a87" stroke-width="2"/><path d="M11,11v-6c0,-2 1,-3 3,-3h8" fill="none" stroke="#f57900" stroke-width="1.200" stroke-dasharray="1.500 1"/></svg><svg class="a" style="left:1318px;top:173px;overflow:visible;" width="24" height="24" viewBox="0 0 24 24"><path d="M13,12.500c0,-2.500 5.500,-2.500 5.500,0.500c2,0 2.500,1.500 2.500,4.500h-8z" fill="#fff" stroke="#babdb6"/><rect x="4.500" y="10" width="11" height="7.500" fill="#3465a4" stroke="#5c3566" stroke-dasharray="1 1"/><path d="M7,11l3,4l3,-4" fill="#729fcf"/><circle cx="10" cy="7" r="3.600" fill="#f57900" stroke="#ce5c00"/><circle cx="9.500" cy="6.500" r="1.800" fill="#fcaf3e"/><rect x="5" y="2.500" width="10" height="9" fill="none" stroke="#555" stroke-width="0.700" stroke-dasharray="1 1.500"/></svg><svg class="a" style="left:1350px;top:173px;overflow:visible;" width="24" height="24" viewBox="0 0 24 24"><path d="M5,12c0,-8 4,-9.500 8,-9.500c2,0 3.500,1 4,3" fill="none" stroke="#888" stroke-width="1.800"/><path d="M5,12c0,-8 4,-9.500 8,-9.500c2,0 3.500,1 4,3" fill="none" stroke="#fff" stroke-width="0.800"/><path d="M2.500,2.500h4v6l-1,1.500l1,1.500v4.500l-1,1.500l1,1.500v4h-4v-4l1,-1.500l-1,-1.500v-4.500l1,-1.500l-1,-1.500z" fill="#fff" stroke="#888a85"/><path d="M17,6c2.500,1.500 3.500,4 3.500,7l-1.500,3h-4l-1.500,-3c0,-3 1,-5.500 3.500,-7z" fill="#edd400" stroke="#c4a000"/><path d="M17,8v5" stroke="#555" stroke-width="1"/><rect x="14.500" y="16.500" width="5" height="6.500" fill="#3465a4" stroke="#204a87"/><rect x="16.500" y="17.500" width="1" height="5" fill="#729fcf"/></svg><svg class="a" style="left:1382px;top:173px;overflow:visible;" width="24" height="24" viewBox="0 0 24 24"><ellipse cx="13" cy="20.500" rx="7" ry="1.400" fill="#000" opacity="0.12"/><path d="M17,7l-9.500,9.500l-2.500,4" fill="none" stroke="#204a87" stroke-width="3.200" stroke-linecap="round"/><path d="M16,8l-8,8" fill="none" stroke="#9fbce0" stroke-width="1.300"/><path d="M14.500,4.500l5,5" stroke="#1a1a1a" stroke-width="2.200" stroke-linecap="round"/><circle cx="19" cy="5" r="3" fill="#204a87"/><circle cx="19" cy="5" r="3" fill="none" stroke="#111" stroke-width="0.800"/><path d="M5,17c-1.500,2 -2,3 -2,4a2,2 0 0 0 4,0c0,-1 -0.500,-2 -2,-4z" fill="#3465a4" stroke="#204a87" stroke-width="0.600"/></svg><svg class="a" style="left:1414px;top:173px;overflow:visible;" width="24" height="24" viewBox="0 0 24 24"><ellipse cx="13" cy="21" rx="8" ry="1.400" fill="#000" opacity="0.12"/><path d="M16,15l6,6" stroke="#555753" stroke-width="3.200" stroke-linecap="round"/><path d="M16,15l6,6" stroke="#babdb6" stroke-width="1" stroke-dasharray="1 1"/><circle cx="11" cy="10" r="8" fill="#a6bfe2" stroke="#8a8c88" stroke-width="1.600"/><path d="M3.800,9.500a7.200,7.200 0 0 1 14.400,0z" fill="#c3d4ec"/><circle cx="11" cy="10" r="7" fill="none" stroke="#dfe6f1" stroke-width="0.700"/></svg><svg class="a" style="left:1126px;top:205px;overflow:visible;" width="24" height="24" viewBox="0 0 24 24"><ellipse cx="12" cy="21" rx="9" ry="1.400" fill="#000" opacity="0.12"/><path d="M9.500,8c-3.500,3 -4.500,8 -3.500,13c1,-4 2.500,-7 5,-9.500zM14.500,8c3.500,3 4.500,8 3.500,13c-1,-4 -2.500,-7 -5,-9.500z" fill="#729fcf" stroke="#3465a4" stroke-width="0.900"/><path d="M4,15.500h16" stroke="#444" stroke-width="0.800"/><rect x="10.500" y="2" width="3" height="3" fill="#729fcf" stroke="#3465a4"/><circle cx="12" cy="7.500" r="2.700" fill="#babdb6" stroke="#666"/><circle cx="12" cy="7.500" r="1" fill="#555"/><rect x="10.500" y="13.500" width="3" height="4" rx="1" fill="#eee" stroke="#666"/><circle cx="18.500" cy="18.500" r="1.700" fill="#fff" stroke="#555"/></svg><svg class="a" style="left:1158px;top:205px;overflow:visible;" width="24" height="24" viewBox="0 0 24 24"><ellipse cx="12" cy="20.500" rx="8" ry="1.600" fill="#000" opacity="0.15"/><g transform="translate(-1,-0.300)"><path d="M12,2.500l4.300,4.700h-2.600v3.100h3.100v-2.600l4.700,4.300l-4.700,4.300v-2.600h-3.100v3.100h2.600l-4.300,4.700l-4.300,-4.700h2.600v-3.100h-3.100v2.600l-4.700,-4.300l4.700,-4.300v2.600h3.100v-3.100h-2.600z" fill="#3d76bd" stroke="#3465a4" stroke-width="0.800" stroke-linejoin="round"/></g><path d="M12,4.500l2,2.500M12,4.500l-2,2.500" stroke="#8fb3e0" stroke-width="0.800"/></svg><svg class="a" style="left:1190px;top:205px;overflow:visible;" width="24" height="24" viewBox="0 0 24 24"><rect x="7.500" y="8" width="10" height="8.500" rx="1" fill="#ececec" stroke="#a0a0a0"/><path d="M12.500,2v4.500M10.800,4h3.400M12.500,18.500v4.500M10.800,21h3.400M1.500,12.300h4.500M3.500,10.600v3.400M19,12.300h4.500M21.500,10.600v3.400" stroke="#000" stroke-width="1.300"/><path d="M12.500,1.800l-1.500,1.800h3zM12.500,23.200l-1.500,-1.800h3zM1.300,12.300l1.800,-1.500v3zM23.700,12.300l-1.800,-1.500v3z" fill="#000"/></svg><svg class="a" style="left:1222px;top:205px;overflow:visible;" width="24" height="24" viewBox="0 0 24 24"><ellipse cx="15" cy="20.500" rx="7" ry="1.300" fill="#000" opacity="0.12"/><path d="M2.500,21l8.500,-11l4.500,-1l3,2l-9,7.500z" fill="#d3d7cf" stroke="#888a85" stroke-width="0.900"/><path d="M2.500,21l9,-6.500" stroke="#555" stroke-width="0.800"/><path d="M11,10l6,-7.500l0.500,4l4.500,-1.500l-6.500,6.500z" fill="#eeeeec" stroke="#888a85" stroke-width="0.900"/><path d="M16,8.500l2,-3" stroke="#babdb6" stroke-width="1.500"/></svg><svg class="a" style="left:1254px;top:205px;overflow:visible;" width="24" height="24" viewBox="0 0 24 24"><ellipse cx="13" cy="20.500" rx="9" ry="1.500" fill="#000" opacity="0.12"/><rect x="5.500" y="3.500" width="10" height="8" fill="#5b8bc7" stroke="#204a87"/><rect x="8" y="8" width="10" height="8" transform="rotate(40 13 12)" fill="#3d76bd" stroke="#204a87"/><path d="M17.500,3.500c2.500,0 4,1.500 4.500,3.500l-1.500,2.500l-2.500,-2M3,15.500c0.500,2.500 2,4 4.500,4.500l0,-2l-2,-3z" fill="#fff" stroke="#3465a4" stroke-width="1.100"/></svg><svg class="a" style="left:1286px;top:205px;overflow:visible;" width="24" height="24" viewBox="0 0 24 24"><ellipse cx="13" cy="21" rx="9" ry="1.400" fill="#000" opacity="0.12"/><rect x="6.500" y="7" width="15.500" height="14" fill="#5b8bc7" stroke="#204a87" stroke-width="1.200"/><rect x="8" y="8.500" width="12.500" height="11" fill="none" stroke="#8fb3e0" stroke-width="0.700"/><rect x="1.500" y="3" width="6.500" height="6" fill="#729fcf" stroke="#204a87" stroke-width="1.200"/><path d="M5,6l11,11" stroke="#fff" stroke-width="1.500"/><path d="M17.500,18.500l-4.500,-1l3.500,-3.500z" fill="#fff"/><path d="M10.500,4.500h5.500v6M4.500,11.500v5.500" stroke="#fff" stroke-width="0.900" stroke-dasharray="1 1.200" fill="none"/></svg><svg class="a" style="left:1318px;top:205px;overflow:visible;" width="24" height="24" viewBox="0 0 24 24"><ellipse cx="13" cy="20" rx="9" ry="1.400" fill="#000" opacity="0.12"/><path d="M5.500,5.500h11l4,12h-15z" fill="#5b8bc7" stroke="#204a87" stroke-width="1"/><path d="M5.500,5.500h11v12h-11z" fill="#3d76bd" opacity="0.550" stroke="#204a87" stroke-width="1"/><path d="M8,8h7l3,8.500h-9z" fill="none" stroke="#a9c4e6" stroke-width="0.700"/><path d="M3,18h3v-1.800l3.500,3l-3.500,3v-1.800h-3z" fill="#fff" stroke="#3465a4" stroke-width="0.900"/></svg><svg class="a" style="left:1350px;top:205px;overflow:visible;" width="24" height="24" viewBox="0 0 24 24"><ellipse cx="12" cy="21" rx="9" ry="1.400" fill="#000" opacity="0.12"/><path d="M7.500,4.500h9.500l5,14h-19.500z" fill="#6b98d0" stroke="#3465a4" stroke-width="1"/><rect x="7.500" y="5" width="9" height="11" fill="#4a7fc1" opacity="0.800"/><path d="M2.500,16.500h19.500v2.500h-19.500z" fill="#5b8bc7" opacity="0.700"/><rect x="3.500" y="18" width="4.500" height="4.500" fill="#fff" stroke="#3465a4"/><rect x="16.500" y="18" width="4.500" height="4.500" fill="#fff" stroke="#3465a4"/><path d="M4.500,19l2.500,2.500M20,19l-2.500,2.500" stroke="#3465a4" stroke-width="1"/></svg><svg class="a" style="left:1382px;top:205px;overflow:visible;" width="24" height="24" viewBox="0 0 24 24"><ellipse cx="12" cy="21.500" rx="9" ry="1.300" fill="#000" opacity="0.12"/><path d="M2,5h11.500v15h-11.500z" fill="#3d76bd" stroke="#204a87" stroke-width="1.200"/><path d="M13.500,5l8,-1.500v18.500l-8,-2z" fill="#8fb3e0" stroke="#204a87" stroke-width="1.200"/><path d="M4,12.500l3.500,-3v2h9v-2l3.500,3l-3.500,3v-2h-9v2z" fill="#fff" opacity="0.920"/></svg><svg class="a" style="left:1414px;top:205px;overflow:visible;" width="24" height="24" viewBox="0 0 24 24"><path d="M5,4.500l13.500,3l-1,12l-13,-3zM5,4.500l6.500,8l7,7M11.500,12.500l-7,4" fill="none" stroke="#777" stroke-width="1.600"/><path d="M5,4.500l13.500,3l-1,12l-13,-3z" fill="none" stroke="#ddd" stroke-width="0.600"/><g fill="#3d76bd" stroke="#204a87" stroke-width="0.900"><circle cx="5" cy="4.500" r="2.800"/><circle cx="19" cy="7.500" r="2.800"/><circle cx="11.500" cy="12.500" r="2.800"/><circle cx="4.500" cy="16.500" r="2.800"/><circle cx="18" cy="19.500" r="2.800"/></g><g fill="#8fb3e0"><circle cx="4.500" cy="3.700" r="1"/><circle cx="18.500" cy="6.700" r="1"/><circle cx="11" cy="11.700" r="1"/><circle cx="4" cy="15.700" r="1"/><circle cx="17.500" cy="18.700" r="1"/></g></svg><svg class="a" style="left:1126px;top:238px;overflow:visible;" width="24" height="24" viewBox="0 0 24 24"><ellipse cx="12" cy="21.300" rx="10" ry="1.300" fill="#000" opacity="0.2"/><text x="11" y="19.800" text-anchor="middle" font-family="Liberation Sans, sans-serif" font-weight="bold" font-size="25.500" fill="#111" stroke="#000" stroke-width="0.800" textLength="21.500" lengthAdjust="spacingAndGlyphs">A</text></svg><svg class="a" style="left:1158px;top:238px;overflow:visible;" width="24" height="24" viewBox="0 0 24 24"><ellipse cx="13" cy="21" rx="8" ry="1.400" fill="#000" opacity="0.12"/><path d="M3.500,18v-8.500c0,-1.500 2.500,-1.500 4.500,-1" fill="none" stroke="#3465a4" stroke-width="2.400"/><path d="M3.500,18v-8.500c0,-1.500 2.500,-1.500 4.500,-1" fill="none" stroke="#c5d6ee" stroke-width="0.900"/><path d="M6,10.500l10.500,-5.500l5,10.500l-10.500,6z" fill="#eeeeec" stroke="#888a85" stroke-width="1"/><path d="M9,9l8,-3.500l4,9" fill="none" stroke="#fff" stroke-width="1"/><circle cx="15" cy="5" r="2.400" fill="none" stroke="#888a85" stroke-width="1.300"/><path d="M15,7.500l-2,4.500" stroke="#888a85" stroke-width="1"/><circle cx="13" cy="12.500" r="1.700" fill="#d3d7cf" stroke="#777"/></svg><svg class="a" style="left:1190px;top:238px;overflow:visible;" width="24" height="24" viewBox="0 0 24 24"><defs><linearGradient id="bg1"><stop offset="0" stop-color="#555"/><stop offset="1" stop-color="#fff"/></linearGradient></defs><ellipse cx="12" cy="21.500" rx="10" ry="1.200" fill="#000" opacity="0.12"/><rect x="3.500" y="3.500" width="17" height="17" fill="url(#bg1)" stroke="#555" stroke-width="1.400"/><rect x="4.800" y="4.800" width="14.400" height="14.400" fill="none" stroke="#fff" stroke-width="0.500" opacity="0.500"/></svg><svg class="a" style="left:1222px;top:238px;overflow:visible;" width="24" height="24" viewBox="0 0 24 24"><ellipse cx="13" cy="21" rx="8" ry="1.300" fill="#000" opacity="0.12"/><path d="M3,21l2,-5.500l12,-11.500l3.500,3.500l-12,11.500z" fill="#e9b96e" stroke="#8f5902" stroke-width="0.900"/><path d="M6.500,16l11.500,-11" stroke="#fce9b0" stroke-width="1.200"/><path d="M8,19l12,-11.500" stroke="#c17d11" stroke-width="1.300"/><path d="M17,4l1.500,-1.200c1,-0.800 4,1.500 3.200,3l-1.200,1.700z" fill="#ef2929" stroke="#a40000" stroke-width="0.700"/><path d="M3,21l0.800,-2.500l1.700,1.700z" fill="#333"/></svg><svg class="a" style="left:1254px;top:238px;overflow:visible;" width="24" height="24" viewBox="0 0 24 24"><ellipse cx="12" cy="21.500" rx="7" ry="1.200" fill="#000" opacity="0.12"/><path d="M21,2.500c-3,3 -6.500,7.500 -8.500,11.500l2.500,1.500c2.500,-4 5,-8.500 6,-13z" fill="#c17d11" stroke="#8f5902" stroke-width="0.800"/><path d="M12.500,13.500l2.500,2l-2.500,3.500l-3,-2z" fill="#d3d7cf" stroke="#888a85" stroke-width="0.800"/><path d="M9.500,17l3,2c-1.500,2.500 -5,3 -9.500,3c2.500,-1 5,-2.500 6.500,-5z" fill="#111"/></svg><svg class="a" style="left:1286px;top:238px;overflow:visible;" width="24" height="24" viewBox="0 0 24 24"><path d="M7.500,5.500h12.500l2,1v6.500l-4.500,6.500h-13l-1.500,-1v-6z" fill="#f4b8b8" stroke="#ef2929" stroke-width="1.500" stroke-linejoin="round"/><path d="M3.500,13h13.500l4.500,-6.500" fill="none" stroke="#fbe0e0" stroke-width="1.200"/><path d="M3.500,14.500h13.500v4.500h-13z" fill="#f08f8f"/></svg><svg class="a" style="left:1318px;top:238px;overflow:visible;" width="24" height="24" viewBox="0 0 24 24"><path d="M21,3.500l-9.500,10" stroke="#222" stroke-width="3.400" stroke-linecap="round"/><path d="M20.500,4l-8,8.500" stroke="#777" stroke-width="0.900" stroke-dasharray="1 1"/><path d="M12,13l-4,4.500" stroke="#666" stroke-width="2.400" stroke-linecap="round"/><path d="M12,13l-4,4.500" stroke="#eee" stroke-width="0.900"/><circle cx="12" cy="8.500" r="1.300" fill="#555"/><path d="M14,13c1,3 2,4.500 4,4.500s2,-1.500 4,-1.500" fill="none" stroke="#888" stroke-width="1.600"/><path d="M7,18.500l-4.500,4l1.500,-5z" fill="#729fcf" opacity="0.850"/></svg><svg class="a" style="left:1350px;top:238px;overflow:visible;" width="24" height="24" viewBox="0 0 24 24"><ellipse cx="11" cy="20.500" rx="8" ry="1.500" fill="#000" opacity="0.15"/><rect x="7" y="3" width="8" height="4.500" rx="1.500" fill="#555753" stroke="#2e3436"/><path d="M5,8.500c0,-1.500 12,-1.500 12,0c1.500,1.500 1.500,3 1.500,5v4c0,2 -15,2 -15,0v-4c0,-2 0,-3.500 1.500,-5z" fill="#555753" stroke="#2e3436"/><path d="M5,12h12v6.500h-12z" fill="#204a87"/><path d="M5.500,13h11v2h-11z" fill="#3465a4"/><path d="M18,21l1.500,-2l1,1.500l2,-1.500l-1,2l2,0.500l-3,0.500l-1,1.500l-0.500,-1.500l-2.500,0z" fill="#3465a4"/><circle cx="22.500" cy="17" r="0.600" fill="#3465a4"/></svg><svg class="a" style="left:1382px;top:238px;overflow:visible;" width="24" height="24" viewBox="0 0 24 24"><ellipse cx="12" cy="20.500" rx="9" ry="1.500" fill="#000" opacity="0.15"/><circle cx="12" cy="6" r="2.700" fill="#eeeeec" stroke="#c17d11" stroke-width="1.100"/><path d="M11,8.500h2v4h-2z" fill="#e9b96e" stroke="#c17d11" stroke-width="0.800"/><path d="M6.500,12.500h11c1,0 1.500,1 1.500,2v4.500h-14v-4.500c0,-1 0.500,-2 1.500,-2z" fill="#f5e6c8" stroke="#c17d11" stroke-width="1.100"/><path d="M5.500,16h13" stroke="#c17d11" stroke-width="0.600"/><path d="M9.500,16.300h5l-2.500,1.700z" fill="#222"/></svg><svg class="a" style="left:1414px;top:238px;overflow:visible;" width="24" height="24" viewBox="0 0 24 24"><g transform="rotate(45 12 12)"><rect x="0.500" y="8" width="23" height="8" rx="4" fill="#edd400" stroke="#c4a000"/></g><g transform="rotate(-45 12 12)"><rect x="0.500" y="8" width="23" height="8" rx="4" fill="#edd400" stroke="#c4a000"/><rect x="8.500" y="8.800" width="7" height="6.400" fill="#f7e86a" stroke="#c4a000" stroke-width="0.500"/></g></svg><svg class="a" style="left:1126px;top:270px;overflow:visible;" width="24" height="24" viewBox="0 0 24 24"><path d="M4,8l13,-2.500l-0.500,16l-14,-4.500z" fill="#3d76bd" stroke="#204a87" stroke-width="1"/><path d="M5,9l11,-2l-0.500,13.500" fill="none" stroke="#8fb3e0" stroke-width="0.700"/><circle cx="7" cy="4.500" r="2.200" fill="#eeeeec" stroke="#c17d11" stroke-width="1"/><path d="M6,6.500h2v2.500h-2z" fill="#e9b96e" stroke="#c17d11" stroke-width="0.700"/><path d="M3,9.500h8c0.800,0 1.200,0.800 1.200,1.500v3h-10.400v-3c0,-0.700 0.400,-1.500 1.200,-1.500z" fill="#f5e6c8" stroke="#c17d11" stroke-width="1"/><path d="M5,12.300h4l-2,1.200z" fill="#222"/></svg><svg class="a" style="left:1158px;top:270px;overflow:visible;" width="24" height="24" viewBox="0 0 24 24"><ellipse cx="12" cy="20.500" rx="7" ry="1.500" fill="#000" opacity="0.15"/><path d="M12,4c1,4 6,8 6,11.500a6,5.500 0 0 1 -12,0c0,-3.500 5,-7.500 6,-11.500z" fill="#a6bfe2" stroke="#3465a4" stroke-width="1"/><path d="M9,16c0,-2 1.500,-4 3,-6" fill="none" stroke="#e0eaf6" stroke-width="1.300"/></svg><svg class="a" style="left:1190px;top:270px;overflow:visible;" width="24" height="24" viewBox="0 0 24 24"><ellipse cx="13" cy="20" rx="8" ry="1.400" fill="#000" opacity="0.12"/><path d="M18,4l-5,3.500l-4,1c-2,1 -2.500,3 -2.500,5.500l1.500,2l-2,2l1,1.500l4,-2l4,-1.500c2,-1 2.500,-3 2,-6l3,-5z" fill="#f0c9ad" stroke="#c17d11" stroke-width="1"/><path d="M9,10l-1,4M10.500,9.500l-1,4.500M12,9.500l-0.500,4" stroke="#c17d11" stroke-width="0.600"/><path d="M12,14l1.500,-1.500l1,1.500z" fill="#8f5902"/></svg><svg class="a" style="left:1222px;top:270px;overflow:visible;" width="24" height="24" viewBox="0 0 24 24"><ellipse cx="11" cy="20" rx="6" ry="1.300" fill="#000" opacity="0.15"/><path d="M13,12l9,-8.500" stroke="#2e3436" stroke-width="2.200" stroke-linecap="round"/><path d="M14,11l7.500,-7" stroke="#888" stroke-width="0.600"/><circle cx="10.500" cy="14.500" r="5.500" fill="#2e3436" stroke="#1a1a1a"/><circle cx="10.500" cy="14.500" r="4" fill="none" stroke="#555753" stroke-width="0.800"/></svg><div class="a" style="left:1271px;top:316px;width:37px;height:27px;background:#fff;box-shadow:1px 1px 0 #000, -1px -1px 0 #fff;"></div><div class="a" style="left:1256px;top:303px;width:36px;height:26px;background:#9d8070;box-shadow:-1px -1px 0 #000, 1px 1px 0 #fff;"></div><div class="a" style="left:1260px;top:337px;width:7px;height:7px;background:#fff;border:1px solid #bbb;box-sizing:border-box"></div><div class="a" style="left:1256px;top:333px;width:7px;height:7px;background:#000;"></div><svg class="a" style="left:1296px;top:301px;" width="14" height="14" viewBox="0 0 14 14"><path d="M2,4l3.500,-3v2h3c2,0 3,1 3,3v2.500h2l-3,3.500l-3,-3.500h2v-2.500c0,-0.700 -0.300,-1 -1,-1h-3v2z" fill="#fff" stroke="#999" stroke-width="0.800"/></svg><div class="a" style="left:1122px;top:375px;width:319px;height:1px;background:#d0d0d0;"></div><div class="a" style="left:1122px;top:346px;width:104px;height:30px;background:#fff;border-top:1px solid #d9d9d9;border-right:1px solid #d9d9d9;box-sizing:border-box"></div><svg class="a" style="left:1128px;top:354px;" width="19" height="19" viewBox="0 0 19 19"><rect x="0.500" y="0.500" width="17" height="16" rx="1.500" fill="#f4f4f4" stroke="#aaa"/><rect x="3.500" y="4" width="3" height="5" fill="#fff" stroke="#888" stroke-width="0.800"/><rect x="4" y="9" width="2" height="5" fill="#6a7a7a"/><rect x="10.500" y="6" width="4" height="5" rx="1" fill="#fff" stroke="#555" stroke-width="0.900"/><rect x="11.500" y="3.500" width="2" height="10" fill="#6a7a7a" opacity="0.700"/></svg><span class="t" style="left:1151px;top:355.07px;font-size:13.5px;color:#000;transform:scaleX(0.9061);">Tool Options</span><svg class="a" style="left:1425px;top:356px;" width="13" height="13" viewBox="0 0 13 13"><rect x="0.500" y="0.500" width="10" height="10" rx="1.500" fill="#f4f4f4" stroke="#777"/><path d="M8,3v5l-5,-2.500z" fill="#666"/></svg><span class="t" style="left:1125.5px;top:382.42px;font-size:12.5px;color:#000;font-weight:bold;transform:scaleX(0.9599);">Hue-Saturation</span><div class="a" style="left:1126px;top:397px;width:312px;height:561px;background:#f0f0f0;"></div><span class="t" style="left:1249.5px;top:405.42px;font-size:12.5px;color:#222;font-style:italic;transform:scaleX(0.9030);">This tool has</span><span class="t" style="left:1253px;top:420.42px;font-size:12.5px;color:#222;font-style:italic;transform:scaleX(0.9155);">no options.</span><svg class="a" style="left:1157px;top:964px;" width="14" height="14" viewBox="0 0 14 14"><rect x="0.500" y="0.500" width="13" height="13" rx="1" fill="#3465a4" stroke="#204a87"/><rect x="1.500" y="1" width="11" height="2.500" fill="#ef2929"/><rect x="1.500" y="3.500" width="11" height="4" fill="#eeeeec"/><rect x="3.500" y="8.500" width="8" height="5" fill="#d3d7cf"/><rect x="5" y="9.500" width="2" height="3" fill="#3465a4"/></svg><svg class="a" style="left:1235px;top:964px;" width="14" height="14" viewBox="0 0 14 14"><rect x="0.500" y="0.500" width="13" height="13" rx="1.500" fill="#d9dbd5" stroke="#334" stroke-dasharray="1 1"/><rect x="1.500" y="1" width="11" height="2.500" fill="#b44" opacity="0.700"/><path d="M3.500,5.500l7,5" stroke="#c4a000" stroke-width="2.600" opacity="0.750"/><rect x="1" y="1" width="12" height="12" fill="url(#hk)" opacity="0.350"/></svg><svg class="a" style="left:1312px;top:963px;" width="14" height="15" viewBox="0 0 14 15"><path d="M2.500,4h9l-1,9.500h-7z" fill="url(#hk)"/><ellipse cx="7" cy="3.500" rx="5" ry="2" fill="url(#hk)"/></svg><svg class="a" style="left:1391px;top:963px;" width="15" height="15" viewBox="0 0 15 15"><path d="M4.500,3.500h8v9h-6" fill="none" stroke="#c4a000" stroke-width="3.200" stroke-linejoin="round"/><path d="M4.500,3.500h8v9h-6" fill="none" stroke="#fce94f" stroke-width="1.400" stroke-linejoin="round"/><path d="M5.500,0.800l-3.500,2.700l3.500,2.700z" fill="#edd400" stroke="#c4a000" stroke-width="0.600"/><circle cx="3.500" cy="12.200" r="2.300" fill="#3465a4" stroke="#204a87" stroke-width="0.700"/></svg>
<!-- layers --><div class="a" style="left:1540px;top:176px;width:200px;height:818px;background:#fff;"></div><span class="t" style="left:1549px;top:187.18px;font-size:15.5px;color:#999;transform:scaleX(0.9004);">Layers - Brushes</span><div class="a" style="left:1714px;top:184px;width:25px;height:25px;background:#e5e5e5;"></div><svg class="a" style="left:1714px;top:184px;" width="25" height="25" viewBox="0 0 25 25"><path d="M9,9l7,7M16,9l-7,7" stroke="#f6f6f6" stroke-width="1.400"/></svg><div class="a" style="left:1541px;top:213px;width:198px;height:30px;background:#f0f0f0;"></div><div class="a" style="left:1541px;top:242px;width:198px;height:1px;background:#d4d4d4;"></div><div class="a" style="left:1541px;top:213px;width:33px;height:30px;background:#fff;border-top:1px solid #e0e0e0;border-right:1px solid #d9d9d9;box-sizing:border-box"></div><div class="a" style="left:1574px;top:215px;width:28px;height:27px;background:#f0f0f0;border:1px solid #dcdcdc;border-bottom:none;box-sizing:border-box"></div><div class="a" style="left:1602px;top:215px;width:28px;height:27px;background:#f0f0f0;border:1px solid #dcdcdc;border-bottom:none;box-sizing:border-box"></div><div class="a" style="left:1630px;top:215px;width:30px;height:27px;background:#f0f0f0;border:1px solid #dcdcdc;border-bottom:none;box-sizing:border-box"></div><svg class="a" style="left:1544px;top:219px;" width="28" height="22" viewBox="0 0 28 22"><g stroke="#a0a0a0" stroke-width="0.900"><path d="M1,20l3,-5.500h19l-3,5.500z" fill="#fff"/><path d="M1,16.500l3,-5.500h19l-3,5.500z" fill="#fff"/><path d="M1.500,12.500l3.500,-10h19l-3.500,10z" fill="#e4e4e4"/></g></svg><svg class="a" style="left:1573px;top:217px;" width="28" height="26" viewBox="0 0 28 26"><ellipse cx="14" cy="23" rx="11" ry="1.500" fill="#000" opacity="0.120"/><path d="M1,20l3,-5h20l-3,5.500z" fill="#3465a4" stroke="#204a87" stroke-width="0.800"/><path d="M1,16.500l3,-5h20l-3,5.500z" fill="#4e9a06" stroke="#3a7a04" stroke-width="0.800"/><path d="M2,12l4,-9h18.500l-4,9.500z" fill="#e82020" stroke="#a40000" stroke-width="0.800"/><path d="M6.500,4h16" stroke="#f99" stroke-width="0.800"/></svg><svg class="a" style="left:1602px;top:217px;" width="28" height="26" viewBox="0 0 28 26"><path d="M8,24c0,-8 2,-13 6,-13s4,4 8,4M9,24c3,-5 6,-5 9,-1M24,3c0,3 -1,5 -2,7" fill="none" stroke="#3465a4" stroke-width="1"/><path d="M3,12l10,-9M12,15l9,8M11,17l4,4M18,13l4,-3" stroke="#000" stroke-width="0.900"/><g fill="#fff" stroke="#000" stroke-width="1"><rect x="7.500" y="6.500" width="2.500" height="2.500"/><rect x="18.500" y="11.500" width="2.500" height="2.500"/><rect x="13.500" y="18.500" width="2.500" height="2.500"/></g><g fill="#000"><circle cx="3" cy="12" r="1"/><circle cx="13.500" cy="3" r="1"/><circle cx="22.500" cy="9.500" r="1"/><circle cx="11" cy="14.500" r="1"/><circle cx="17" cy="23" r="1"/></g></svg><svg class="a" style="left:1631px;top:217px;" width="28" height="26" viewBox="0 0 28 26"><ellipse cx="14" cy="23" rx="10" ry="1.600" fill="#000" opacity="0.150"/><path d="M13,3l5,0c5,1 7,5 6,9c-0.500,3 -2,5 -4,6c1,-3 0,-6 -2,-7l0,3l-6,-5.500z" fill="#f5e79a" stroke="#d9c45a" stroke-width="0.800"/><path d="M2.500,8.500l7.500,-6.500v4c6,0 9,3 9,7c0,3 -2,6 -5,8c-1.500,-1 -2,-2 -2,-3c2,-1 3,-3 2,-5c-1,-1.500 -2.500,-2 -4,-2v4.500z" fill="#edd400" stroke="#c4a000" stroke-width="0.900"/></svg><svg class="a" style="left:1723px;top:223px;" width="13" height="13" viewBox="0 0 13 13"><rect x="0.500" y="0.500" width="10" height="10" rx="1.500" fill="#f4f4f4" stroke="#777"/><path d="M8,3v5l-5,-2.500z" fill="#666"/></svg><span class="t" style="left:1544px;top:250.07px;font-size:13.5px;color:#000;transform:scaleX(0.9200);">Mode: Normal</span><div class="a" style="left:1717px;top:247px;width:19px;height:19px;background:#e1e1e1;border:1px solid #adadad;box-sizing:border-box"></div><svg class="a" style="left:1721px;top:254px;" width="11" height="7" viewBox="0 0 11 7"><path d="M1,1l4.5,4.5l4.5,-4.5" stroke="#333" stroke-width="1" fill="none"/></svg><div class="a" style="left:1544px;top:268px;width:192px;height:34px;background:#b6c3ce;border:1px solid #000;box-sizing:border-box"></div><div class="a" style="left:1725px;top:269px;width:1px;height:32px;background:#5a6a78;"></div><div class="a" style="left:1726px;top:269px;width:9px;height:32px;background:#fff;"></div><svg class="a" style="left:1726px;top:269px;" width="9" height="32" viewBox="0 0 9 32"><path d="M1,22.500h7l-3.500,4z" fill="#000"/><path d="M1,13.500h7M1,18.500h7" stroke="#bbb" stroke-width="1"/><path d="M1,9.500h7l-3.500,-4z" fill="#999"/></svg><span class="t" style="left:1546.5px;top:277.77px;font-size:13.5px;color:#000;transform:scaleX(0.8737);">Opacity</span><span class="t" style="left:1697.5px;top:277.77px;font-size:13.5px;color:#000;transform:scaleX(0.7989);">100.0</span><span class="t" style="left:1544px;top:307.07px;font-size:13.5px;color:#000;transform:scaleX(0.8674);">Lock:</span><svg class="a" style="left:1581px;top:306px;" width="18" height="18" viewBox="0 0 18 18"><path d="M14.500,1.500l2.500,2l-4,6l-3,-2z" fill="#f5b070" stroke="#c17d11" stroke-width="0.500"/><path d="M10,7.500l3,2l-2.500,3.500l-3,-2z" fill="#d3d7cf" stroke="#888" stroke-width="0.500"/><path d="M7.500,11l3,2c-1.500,2.500 -5,3 -9.500,3c2.500,-1 5,-2.500 6.500,-5z" fill="#111"/></svg><div class="a" style="left:1604px;top:306px;width:16px;height:16px;background:#999;background-image:conic-gradient(#999 25%,#777 0 50%,#999 0 75%,#777 0);background-size:8px 8px"></div><div class="a" style="left:1544px;top:326px;width:192px;height:256px;background:#fff;border:1px solid #abadb3;box-sizing:border-box"></div><div class="a" style="left:1546px;top:328px;width:188px;height:40px;background:#f0f0f0;"></div><svg class="a" style="left:1550px;top:340px;" width="20" height="16" viewBox="0 0 20 16"><path d="M1,8c3,-4 6,-5.500 9,-5.500s6,1.500 9,5.500c-3,3.500 -6,5 -9,5s-6,-1.500 -9,-5z" fill="#fff" stroke="#888" stroke-width="1"/><circle cx="10" cy="7.500" r="3.600" fill="#204a87"/><circle cx="10" cy="7.500" r="2" fill="#3465a4"/><circle cx="9" cy="6.300" r="1.200" fill="#fff"/></svg><div class="a" style="left:1620px;top:330px;width:36px;height:37px;background:#fff;"></div><svg class="a" style="left:1622px;top:332px;" width="32" height="32" viewBox="14 182 684 685"><rect x="14" y="182" width="684" height="685" fill="#6b4238"/><use href="#facemini"/></svg><span class="t" style="left:1660px;top:340.77px;font-size:13.5px;color:#000;transform:scaleX(0.8130);">_Export_2020-</span><div class="a" style="left:1545px;top:560px;width:190px;height:20px;background:#f0f0f0;"></div><div class="a" style="left:1567px;top:560px;width:65px;height:19px;background:#cdcdcd;"></div><svg class="a" style="left:1546px;top:560px;" width="20" height="19" viewBox="0 0 20 19"><path d="M11.500,5.500l-4,4l4,4" stroke="#bfbfbf" stroke-width="2" fill="none"/></svg><svg class="a" style="left:1714px;top:560px;" width="20" height="19" viewBox="0 0 20 19"><path d="M7,5.500l4,4l-4,4" stroke="#505050" stroke-width="2" fill="none"/></svg><svg class="a" style="left:1550px;top:585px;" width="14" height="15" viewBox="0 0 14 15"><path d="M2.500,1.500h6l3,3v9h-9z" fill="#fff" stroke="#aaa"/><path d="M8.500,1.500v3h3" fill="none" stroke="#aaa"/></svg><svg class="a" style="left:1576px;top:585px;" width="14" height="15" viewBox="0 0 14 15"><path d="M1,3.500h5l1,1.500h6v8h-12z" fill="#c9d3b0" stroke="#9aa383"/><path d="M1.500,6.500h11.500v6h-11.500z" fill="#dbe3c6"/></svg><svg class="a" style="left:1603px;top:585px;" width="14" height="15" viewBox="0 0 14 15"><defs><pattern id="hg" width="2" height="2" patternUnits="userSpaceOnUse"><rect width="2" height="2" fill="#a8c888"/><rect width="1" height="1" fill="#4a7a1a"/><rect x="1" y="1" width="1" height="1" fill="#4a7a1a"/></pattern><pattern id="hk" width="2" height="2" patternUnits="userSpaceOnUse"><rect width="2" height="2" fill="#c8c8c8"/><rect width="1" height="1" fill="#333"/><rect x="1" y="1" width="1" height="1" fill="#333"/></pattern></defs><path d="M7,1.500l5,5h-2.800v6h-4.400v-6h-2.800z" fill="url(#hg)"/></svg><svg class="a" style="left:1630px;top:585px;" width="14" height="15" viewBox="0 0 14 15"><path d="M7,12.500l5,-5h-2.800v-6h-4.400v6h-2.800z" fill="url(#hg)"/></svg><svg class="a" style="left:1657px;top:585px;" width="14" height="15" viewBox="0 0 14 15"><rect x="4" y="4" width="9" height="9" fill="#d3d7cf" stroke="#666"/><rect x="1" y="1" width="9.500" height="9.500" fill="#3465a4" stroke="#555"/><rect x="2.500" y="2.500" width="6.500" height="4" fill="#204a87"/><path d="M2.500,7.500l2,-1.500l2,1.500l2.500,-2v3h-6.500z" fill="#d8c080"/></svg><svg class="a" style="left:1684px;top:585px;" width="14" height="15" viewBox="0 0 14 15"><path d="M7,2v10M4.500,5.500h5M1.500,8c0,3 2.500,4.500 5.500,4.500s5.500,-1.500 5.500,-4.500" fill="none" stroke="url(#hk)" stroke-width="2.200"/><circle cx="7" cy="2.500" r="1.800" fill="url(#hk)"/></svg><svg class="a" style="left:1713px;top:585px;" width="14" height="15" viewBox="0 0 14 15"><path d="M2.500,4h9l-1,9h-7z" fill="#777" stroke="#444"/><ellipse cx="7" cy="3.500" rx="5.200" ry="2.200" fill="#aaa" stroke="#444"/><ellipse cx="7" cy="3.500" rx="3" ry="1" fill="#666"/></svg><div class="a" style="left:1541px;top:604px;width:198px;height:36px;background:#f0f0f0;border-top:1px solid #dedede;box-sizing:border-box"></div><div class="a" style="left:1541px;top:638px;width:198px;height:1px;background:#dcdcdc;"></div><div class="a" style="left:1541px;top:610px;width:31px;height:29px;background:#fff;border-top:1px solid #e0e0e0;border-right:1px solid #d9d9d9;box-sizing:border-box"></div><div class="a" style="left:1572px;top:613px;width:27px;height:26px;background:#f0f0f0;border:1px solid #dcdcdc;border-bottom:none;box-sizing:border-box"></div><div class="a" style="left:1599px;top:613px;width:27px;height:26px;background:#f0f0f0;border:1px solid #dcdcdc;border-bottom:none;box-sizing:border-box"></div><div class="a" style="left:1544px;top:615px;width:22px;height:22px;background:#fff;border:1px solid #000;box-sizing:border-box"></div><svg class="a" style="left:1544px;top:615px;" width="22" height="22" viewBox="0 0 22 22"><path d="M9,9l3,3M12,9l-3,3" stroke="#000" stroke-width="1.200"/><path d="M21,16v5h-5z" fill="#6a8ae8"/></svg><div class="a" style="left:1572px;top:616px;width:22px;height:22px;background:repeating-linear-gradient(90deg,#f39a1c 0,#ffd24a 1.5px,#ffbe3a 3px,#f08c14 4.2px);border:1px solid #000;box-sizing:border-box"></div><div class="a" style="left:1600px;top:616px;width:22px;height:22px;background:linear-gradient(90deg,#9d8070,#fff);border:1px solid #000;box-sizing:border-box"></div><svg class="a" style="left:1723px;top:620px;" width="13" height="13" viewBox="0 0 13 13"><rect x="0.500" y="0.500" width="10" height="10" rx="1.500" fill="#f4f4f4" stroke="#777"/><path d="M8,3v5l-5,-2.500z" fill="#666"/></svg><div class="a" style="left:1544px;top:643px;width:192px;height:23px;background:#fff;border:1px solid #adadad;box-sizing:border-box"></div><span class="t" style="left:1548px;top:648.00px;font-size:13px;color:#999;font-style:italic;transform:scaleX(0.9771);">filter</span><svg class="a" style="left:1720px;top:651px;" width="10" height="7" viewBox="0 0 10 7"><path d="M0.500,1h8l-4,4.500z" fill="#000"/></svg><span class="t" style="left:1545.5px;top:670.60px;font-size:13px;color:#222;font-style:italic;transform:scaleX(0.9503);">1. Pixel (3 × 3)</span><div class="a" style="left:1544px;top:688px;width:192px;height:218px;background:#fff;border:1px solid #abadb3;box-sizing:border-box;overflow:hidden"></div><svg class="a" style="left:1545px;top:689px" width="168" height="216" viewBox="1545 689 168 216"><defs><filter id="sf1" filterUnits="userSpaceOnUse" x="1500" y="650" width="280" height="300"><feGaussianBlur stdDeviation="3.200"/></filter><filter id="sf2" filterUnits="userSpaceOnUse" x="1500" y="650" width="280" height="300"><feGaussianBlur stdDeviation="2.600"/></filter><filter id="sf3" filterUnits="userSpaceOnUse" x="1500" y="650" width="280" height="300"><feGaussianBlur stdDeviation="1.800"/></filter><filter id="sf0" filterUnits="userSpaceOnUse" x="1500" y="650" width="280" height="300"><feGaussianBlur stdDeviation="1"/></filter><filter id="g0" x="0" y="0" width="100%" height="100%"><feTurbulence type="fractalNoise" baseFrequency="0.45" numOctaves="2" seed="3" result="n"/><feColorMatrix in="n" type="matrix" values="0 0 0 0 0  0 0 0 0 0  0 0 0 0 0  9 0 0 0 -4.2" result="t"/><feComposite in="t" in2="SourceGraphic" operator="in"/></filter><filter id="g1" x="0" y="0" width="100%" height="100%"><feTurbulence type="fractalNoise" baseFrequency="0.6" numOctaves="2" seed="10" result="n"/><feColorMatrix in="n" type="matrix" values="0 0 0 0 0  0 0 0 0 0  0 0 0 0 0  11 0 0 0 -5.6" result="t"/><feComposite in="t" in2="SourceGraphic" operator="in"/></filter><filter id="g2" x="0" y="0" width="100%" height="100%"><feTurbulence type="fractalNoise" baseFrequency="0.35" numOctaves="3" seed="17" result="n"/><feColorMatrix in="n" type="matrix" values="0 0 0 0 0  0 0 0 0 0  0 0 0 0 0  8 0 0 0 -3.4" result="t"/><feComposite in="t" in2="SourceGraphic" operator="in"/></filter><filter id="g3" x="0" y="0" width="100%" height="100%"><feTurbulence type="fractalNoise" baseFrequency="0.8" numOctaves="2" seed="24" result="n"/><feColorMatrix in="n" type="matrix" values="0 0 0 0 0  0 0 0 0 0  0 0 0 0 0  14 0 0 0 -7.6" result="t"/><feComposite in="t" in2="SourceGraphic" operator="in"/></filter><filter id="g4" x="0" y="0" width="100%" height="100%"><feTurbulence type="fractalNoise" baseFrequency="0.5" numOctaves="1" seed="31" result="n"/><feColorMatrix in="n" type="matrix" values="0 0 0 0 0  0 0 0 0 0  0 0 0 0 0  10 0 0 0 -4.4" result="t"/><feComposite in="t" in2="SourceGraphic" operator="in"/></filter><filter id="g5" x="0" y="0" width="100%" height="100%"><feTurbulence type="fractalNoise" baseFrequency="0.3" numOctaves="2" seed="38" result="n"/><feColorMatrix in="n" type="matrix" values="0 0 0 0 0  0 0 0 0 0  0 0 0 0 0  12 0 0 0 -5.2" result="t"/><feComposite in="t" in2="SourceGraphic" operator="in"/></filter><radialGradient id="rg1"><stop offset="0" stop-color="#000"/><stop offset="0.55" stop-color="#000" stop-opacity="0.75"/><stop offset="1" stop-color="#000" stop-opacity="0"/></radialGradient></defs><g transform="translate(1546,689)"><path d="M2.500,15.500l2,-4l3,-2.500l5,-1.500h10l5,1.500l3,2.500l2,4l-1.500,1l0.500,3l-2,4l-3,2.500l-2,-0.500l-2,1.500l-2,-1l-1,1l-2,-0.500l-2,0.500l-1,-1l-2,1l-2,-1.500l-2,0.500l-3,-2.500l-2,-4l0.500,-3z" fill="#9d8070"/><circle cx="6.500" cy="5.500" r="2.800" fill="#fff" stroke="#9d8070" stroke-width="1.200"/><circle cx="29" cy="5.500" r="2.800" fill="#fff" stroke="#9d8070" stroke-width="1.200"/><path d="M10,17l5,2l-4,1.500zM25,17l-5,2l4,1.500zM17,22.500h1v3h-1z" fill="#fff"/></g><rect x="1580.5" y="689.5" width="33" height="33" fill="#fff" stroke="#000" stroke-width="1"/><rect x="1595" y="704" width="2.500" height="2.500" fill="#000"/><path d="M1613,716v6h-6z" fill="#6a8ae8"/><rect x="1617" y="702" width="29" height="7" fill="#000"/><ellipse cx="1664" cy="705.5" rx="11" ry="3.300" fill="#000" filter="url(#sf0)"/><rect x="1549" y="739" width="29" height="1" fill="#000"/><circle cx="1597" cy="740" r="6.500" fill="#000" filter="url(#sf1)"/><circle cx="1597" cy="740" r="2.500" fill="#000" opacity="0.600" filter="url(#sf0)"/><circle cx="1631" cy="740" r="8.500" fill="#000" filter="url(#sf2)"/><circle cx="1665" cy="740" r="11" fill="#000" filter="url(#sf3)"/><circle cx="1563" cy="774" r="16" fill="#000"/><polygon points="1597.0,761.0 1600.4,770.8 1610.8,771.0 1602.5,777.3 1605.5,787.2 1597.0,781.3 1588.5,787.2 1591.5,777.3 1583.2,771.0 1593.6,770.8" fill="#000"/><ellipse cx="1631" cy="774" rx="10" ry="10" fill="#000" filter="url(#g0)"/><circle cx="1631" cy="774" r="6" fill="#000" opacity="0.700" filter="url(#sf3)"/><ellipse cx="1665" cy="774" rx="12" ry="8" fill="#000" filter="url(#g1)"/><ellipse cx="1665" cy="775" rx="7" ry="3" fill="#000" opacity="0.500" filter="url(#sf3)"/><ellipse cx="1561" cy="806" rx="9" ry="11" fill="#000" filter="url(#g3)"/><ellipse cx="1561" cy="806" rx="3" ry="6" fill="#000" opacity="0.450" filter="url(#sf3)"/><circle cx="1596" cy="806" r="10" fill="#000" opacity="0.500" filter="url(#sf1)"/><circle cx="1596" cy="806" r="11" fill="#000" opacity="0.600" filter="url(#g3)"/><circle cx="1631" cy="807" r="13" fill="#000" filter="url(#g2)"/><circle cx="1631" cy="807" r="8" fill="#000" opacity="0.850" filter="url(#sf3)"/><path d="M1653,794l3,7" stroke="#999" stroke-width="1.500" filter="url(#sf0)"/><circle cx="1558" cy="829" r="1.2" fill="#000" opacity="1"/><circle cx="1550" cy="847" r="1.3" fill="#000" opacity="1"/><circle cx="1570" cy="840" r="1.1" fill="#000" opacity="0.9"/><circle cx="1562" cy="841" r="1.3" fill="#000" opacity="0.5"/><circle cx="1555" cy="844" r="1.4" fill="#000" opacity="0.45"/><circle cx="1563" cy="851" r="1.6" fill="#000" opacity="0.5"/><circle cx="1564" cy="834" r="0.7" fill="#000" opacity="0.5"/><circle cx="1560" cy="846" r="0.8" fill="#000" opacity="0.7"/><circle cx="1593" cy="829" r="1.5" fill="#000" opacity="0.8"/><circle cx="1597" cy="832" r="1.2" fill="#000" opacity="0.7"/><circle cx="1584" cy="839" r="1" fill="#000" opacity="0.6"/><circle cx="1592" cy="837" r="1.3" fill="#000" opacity="0.7"/><circle cx="1596" cy="839" r="1.6" fill="#000" opacity="0.8"/><circle cx="1604" cy="839" r="1.4" fill="#000" opacity="0.8"/><circle cx="1589" cy="844" r="1.5" fill="#000" opacity="0.7"/><circle cx="1593" cy="846" r="1.2" fill="#000" opacity="0.6"/><circle cx="1599" cy="844" r="1.1" fill="#000" opacity="0.7"/><circle cx="1601" cy="849" r="1.3" fill="#000" opacity="0.7"/><circle cx="1588" cy="850" r="1.3" fill="#000" opacity="0.8"/><circle cx="1596" cy="852" r="1.8" fill="#000" opacity="0.8"/><circle cx="1583" cy="833" r="0.8" fill="#000" opacity="0.5"/><circle cx="1602" cy="835" r="0.8" fill="#000" opacity="0.5"/><circle cx="1624" cy="830" r="0.600" fill="#000"/><circle cx="1631" cy="831" r="0.600" fill="#000"/><circle cx="1636" cy="834" r="0.600" fill="#000"/><circle cx="1619" cy="835" r="0.600" fill="#000"/><circle cx="1627" cy="836" r="0.600" fill="#000"/><circle cx="1638" cy="839" r="0.600" fill="#000"/><circle cx="1622" cy="840" r="0.600" fill="#000"/><circle cx="1632" cy="840" r="0.600" fill="#000"/><circle cx="1618" cy="845" r="0.600" fill="#000"/><circle cx="1626" cy="845" r="0.600" fill="#000"/><circle cx="1634" cy="846" r="0.600" fill="#000"/><circle cx="1622" cy="850" r="0.600" fill="#000"/><circle cx="1629" cy="851" r="0.600" fill="#000"/><circle cx="1636" cy="850" r="0.600" fill="#000"/><circle cx="1627" cy="854" r="0.600" fill="#000"/><circle cx="1620" cy="853" r="0.600" fill="#000"/><circle cx="1664" cy="841" r="14" fill="#000" filter="url(#g4)"/><circle cx="1563" cy="876" r="14.500" fill="#000" filter="url(#g5)"/><circle cx="1563" cy="876" r="14" fill="none" stroke="#000" stroke-width="1" stroke-dasharray="3 2"/><circle cx="1597" cy="876" r="14.500" fill="#000" filter="url(#g1)"/><circle cx="1631" cy="876" r="14.500" fill="#000" filter="url(#g0)"/><circle cx="1631" cy="876" r="14" fill="none" stroke="#000" stroke-width="1" stroke-dasharray="2 2"/><circle cx="1665" cy="876" r="13.500" fill="#222"/><circle cx="1665" cy="879" r="13" fill="#fff" opacity="0.500" filter="url(#g2)"/><circle cx="1660" cy="883" r="6" fill="#fff" opacity="0.700" filter="url(#sf1)"/><path d="M1553,904h12" stroke="#000" stroke-width="1.500"/><path d="M1583,904h18" stroke="#222" stroke-width="1.800" stroke-dasharray="2 1"/><path d="M1617,899l4,7M1623,902l3,3" stroke="#888" stroke-width="1.300"/><ellipse cx="1662" cy="904" rx="9" ry="4" fill="#000" opacity="0.600" filter="url(#g3)"/><path d="M1579.0,717.0v5.5h-5.5z" fill="#fff" opacity="0.6"/><path d="M1576.5,717.0v5M1574.0,719.5h5" stroke="#000" stroke-width="1.1"/><path d="M1647.0,717.0v5.5h-5.5z" fill="#3a5ae8" opacity="0.6"/><path d="M1644.5,717.0v5M1642.0,719.5h5" stroke="#000" stroke-width="1.1"/><path d="M1681.0,717.0v5.5h-5.5z" fill="#3a5ae8" opacity="0.6"/><path d="M1678.5,717.0v5M1676.0,719.5h5" stroke="#000" stroke-width="1.1"/><path d="M1579.0,751.0v5.5h-5.5z" fill="#3a5ae8" opacity="0.6"/><path d="M1576.5,751.0v5M1574.0,753.5h5" stroke="#000" stroke-width="1.1"/><path d="M1613.0,751.0v5.5h-5.5z" fill="#3a5ae8" opacity="0.6"/><path d="M1610.5,751.0v5M1608.0,753.5h5" stroke="#000" stroke-width="1.1"/><path d="M1647.0,751.0v5.5h-5.5z" fill="#3a5ae8" opacity="0.6"/><path d="M1644.5,751.0v5M1642.0,753.5h5" stroke="#000" stroke-width="1.1"/><path d="M1681.0,751.0v5.5h-5.5z" fill="#3a5ae8" opacity="0.6"/><path d="M1678.5,751.0v5M1676.0,753.5h5" stroke="#000" stroke-width="1.1"/><path d="M1579.0,785.0v5.5h-5.5z" fill="#3a5ae8" opacity="0.6"/><path d="M1576.5,785.0v5M1574.0,787.5h5" stroke="#000" stroke-width="1.1"/><path d="M1613.0,785.0v5.5h-5.5z" fill="#3a5ae8" opacity="0.6"/><path d="M1610.5,785.0v5M1608.0,787.5h5" stroke="#000" stroke-width="1.1"/><path d="M1647.0,785.0v5.5h-5.5z" fill="#e83a3a" opacity="0.6"/><path d="M1644.5,785.0v5M1642.0,787.5h5" stroke="#000" stroke-width="1.1"/><path d="M1681.0,785.0v5.5h-5.5z" fill="#e83a3a" opacity="0.6"/><path d="M1678.5,785.0v5M1676.0,787.5h5" stroke="#000" stroke-width="1.1"/><path d="M1579.0,819.0v5.5h-5.5z" fill="#e83a3a" opacity="0.6"/><path d="M1576.5,819.0v5M1574.0,821.5h5" stroke="#000" stroke-width="1.1"/><path d="M1613.0,819.0v5.5h-5.5z" fill="#e83a3a" opacity="0.6"/><path d="M1610.5,819.0v5M1608.0,821.5h5" stroke="#000" stroke-width="1.1"/><path d="M1647.0,819.0v5.5h-5.5z" fill="#e83a3a" opacity="0.6"/><path d="M1644.5,819.0v5M1642.0,821.5h5" stroke="#000" stroke-width="1.1"/><path d="M1579.0,853.0v5.5h-5.5z" fill="#fff" opacity="0.6"/><path d="M1576.5,853.0v5M1574.0,855.5h5" stroke="#000" stroke-width="1.1"/><path d="M1613.0,853.0v5.5h-5.5z" fill="#fff" opacity="0.6"/><path d="M1610.5,853.0v5M1608.0,855.5h5" stroke="#000" stroke-width="1.1"/><path d="M1681.0,853.0v5.5h-5.5z" fill="#fff" opacity="0.6"/><path d="M1678.5,853.0v5M1676.0,855.5h5" stroke="#000" stroke-width="1.1"/><path d="M1579.0,887.0v5.5h-5.5z" fill="#fff" opacity="0.6"/><path d="M1576.5,887.0v5M1574.0,889.5h5" stroke="#000" stroke-width="1.1"/><path d="M1613.0,887.0v5.5h-5.5z" fill="#e83a3a" opacity="0.6"/><path d="M1610.5,887.0v5M1608.0,889.5h5" stroke="#000" stroke-width="1.1"/><path d="M1647.0,887.0v5.5h-5.5z" fill="#e83a3a" opacity="0.6"/><path d="M1644.5,887.0v5M1642.0,889.5h5" stroke="#000" stroke-width="1.1"/><path d="M1681.0,887.0v5.5h-5.5z" fill="#e83a3a" opacity="0.6"/><path d="M1678.5,887.0v5M1676.0,889.5h5" stroke="#000" stroke-width="1.1"/><path d="M1681,819v5h-5z" fill="#f07070"/></svg><div class="a" style="left:1714px;top:689px;width:20px;height:216px;background:#f0f0f0;"></div><div class="a" style="left:1714px;top:710px;width:19px;height:78px;background:#cdcdcd;"></div><svg class="a" style="left:1714px;top:690px;" width="20" height="19" viewBox="0 0 20 19"><path d="M5.500,11.500l4.500,-4.500l4.500,4.500" stroke="#c0c0c0" stroke-width="1.500" fill="none"/></svg><svg class="a" style="left:1714px;top:884px;" width="20" height="19" viewBox="0 0 20 19"><path d="M5.500,7l4.500,4.500l4.500,-4.500" stroke="#505050" stroke-width="1.500" fill="none"/></svg><div class="a" style="left:1544px;top:908px;width:192px;height:23px;background:#fff;border:1px solid #adadad;box-sizing:border-box"></div><span class="t" style="left:1548px;top:912.57px;font-size:13.5px;color:#000;transform:scaleX(0.7888);">Basic,</span><svg class="a" style="left:1720px;top:916px;" width="10" height="7" viewBox="0 0 10 7"><path d="M0.500,1h8l-4,4.500z" fill="#000"/></svg><div class="a" style="left:1544px;top:933px;width:192px;height:34px;background:#fff;border:1px solid #000;box-sizing:border-box"></div><div class="a" style="left:1545px;top:934px;width:15px;height:32px;background:#b6c3ce;"></div><div class="a" style="left:1560px;top:934px;width:1px;height:32px;background:#222;"></div><div class="a" style="left:1727px;top:935px;width:8px;height:31px;background:#eee;"></div><svg class="a" style="left:1726px;top:934px;" width="9" height="32" viewBox="0 0 9 32"><path d="M1.500,9h6l-3,-3.500zM1.500,22h6l-3,3.500z" fill="#000"/><path d="M1,15.500h7" stroke="#aaa" stroke-width="2"/></svg><span class="t" style="left:1546.5px;top:943.07px;font-size:13.5px;color:#000;transform:scaleX(0.8505);">Spacing</span><span class="t" style="left:1703.5px;top:943.07px;font-size:13.5px;color:#000;transform:scaleX(0.7990);">20.0</span><svg class="a" style="left:1554.6px;top:972px;" width="14" height="15" viewBox="0 0 14 15"><path d="M2,1.500h7l3,3v9h-10z" fill="#fff" stroke="#aaa"/><path d="M5,10.500l6.500,-7l1.500,1.500l-6.500,7l-2,0.500z" fill="#f0b040" stroke="#b06000" stroke-width="0.700"/><path d="M11,3.500l1,-1l1.500,1.500l-1,1z" fill="#e02020"/></svg><svg class="a" style="left:1592.6px;top:972px;" width="14" height="15" viewBox="0 0 14 15"><path d="M2.500,1.500h6l3,3v9h-9z" fill="#fff" stroke="#aaa"/><path d="M8.500,1.500v3h3" fill="none" stroke="#aaa"/></svg><svg class="a" style="left:1630.4px;top:972px;" width="14" height="15" viewBox="0 0 14 15"><rect x="4" y="4" width="9" height="9" fill="#d3d7cf" stroke="#666"/><rect x="1" y="1" width="9.500" height="9.500" fill="#3465a4" stroke="#555"/><rect x="2.500" y="2.500" width="6.500" height="4" fill="#204a87"/><path d="M2.500,7.500l2,-1.500l2,1.500l2.500,-2v3h-6.500z" fill="#d8c080"/></svg><svg class="a" style="left:1668.4px;top:972px;" width="14" height="15" viewBox="0 0 14 15"><path d="M2.500,4h9l-1,9h-7z" fill="#999" stroke="#666" stroke-dasharray="1 0.700"/><ellipse cx="7" cy="3.500" rx="5.200" ry="2.200" fill="#bbb" stroke="#666" stroke-dasharray="1 0.700"/></svg><svg class="a" style="left:1708.6px;top:972px;" width="14" height="15" viewBox="0 0 14 15"><path d="M1.500,6.500c0,-3 2.500,-5 5.500,-5c2,0 3,0.500 4,1.500l1.500,-1.500v5h-5l1.500,-1.500c-0.500,-0.700 -1,-1 -2,-1c-1.500,0 -2.500,1 -2.500,2.500zM12.500,8c0,3 -2.500,5 -5.500,5c-2,0 -3,-0.500 -4,-1.500l-1.500,1.500v-5h5l-1.500,1.500c0.500,0.700 1,1 2,1c1.500,0 2.500,-1 2.500,-2.500z" fill="#4a86d0" stroke="#204a87" stroke-width="0.700"/></svg>
<!-- post --><div class="a" style="left:0px;top:1074px;width:1920px;height:126px;background:#333;"></div><div class="a" style="left:0px;top:1074px;width:1088px;height:1px;background:#3a3a3a;"></div><div class="a" style="left:0px;top:1198px;width:1088px;height:1px;background:#191919;"></div><div class="a" style="left:0px;top:1199px;width:1077px;height:1px;background:#2020e8;"></div><span class="t" style="left:13.3px;top:1080.60px;font-size:13px;color:#3d9bcb;font-weight:bold;letter-spacing:-0.047px;">Anonymous</span><span class="t" style="left:92px;top:1080.60px;font-size:13px;color:#e6e6e6;letter-spacing:-0.017px;">21 hours ago</span><span class="t" style="left:171.8px;top:1080.60px;font-size:13px;color:#5aa57d;letter-spacing:-0.014px;">No.5742029</span><svg class="a" style="left:247px;top:1084px;" width="10" height="7" viewBox="0 0 10 7"><path d="M1,1.500l3.500,3.500l3.500,-3.500" stroke="#5aa57d" stroke-width="1.300" fill="none"/></svg><span class="t" style="left:13.0px;top:1101.59px;font-size:11px;color:#5aa57d;">Experiment.png</span><svg class="a" style="left:93px;top:1099.3px;" width="13" height="13" viewBox="0 0 13 13"><path d="M4.900,1.500h3.200v4h2.300l-3.900,4.200l-3.900,-4.200h2.300z" fill="#5aa57d"/><path d="M0.300,8.300h3.500l2.700,2.400l2.700,-2.400h3.500v3.900h-12.400z" fill="#5aa57d"/></svg><span class="t" style="left:108.5px;top:1101.59px;font-size:11px;color:#e6e6e6;letter-spacing:0.028px;">(343 KB, 1920x1080)</span><span class="t" style="left:215.6px;top:1101.59px;font-size:11px;color:#5aa57d;">google yandex iqdb wait</span><svg class="a" style="left:13px;top:1115px;" width="125" height="70" viewBox="0 0 125 70"><defs><filter id="tb" x="-5%" y="-5%" width="110%" height="110%"><feGaussianBlur stdDeviation="0.45"/></filter></defs><rect width="125" height="70" fill="#000"/><g filter="url(#tb)"><rect x="47" y="62" width="34" height="6" fill="#1c1a1b"/><rect x="0" y="0.500" width="47" height="65.500" fill="#f3efef"/><rect x="0" y="0" width="47" height="1.300" fill="#2a2020"/><rect x="1" y="12" width="45" height="44" fill="#6f463c"/><path d="M1,56v-18l3,-7l7,-7l8,-3.500h9l8,3.500l7,7l3,7v18z" fill="#9a7b6c"/><path d="M1.500,17l2.500,-3.500l6,-0.500l2.500,4l-0.500,5l-4,3h-3l-3.500,-4zM45.500,17l-2.500,-3.500l-6,-0.500l-2.500,4l0.500,5l4,3h3l3.500,-4z" fill="#9c7e70"/><rect x="15.800" y="12" width="15.500" height="7.600" fill="#b06c6c"/><rect x="3.800" y="33.500" width="2.400" height="10" rx="1" fill="#6b4238"/><rect x="40" y="33.500" width="2.400" height="10" rx="1" fill="#6b4238"/><rect x="47" y="0" width="33" height="63" fill="#f4f4f4"/><rect x="47.500" y="6" width="25.500" height="53" fill="#808080"/><rect x="60" y="15.500" width="11" height="16" fill="#9a7a6c" opacity="0.85"/><rect x="63.500" y="26" width="5" height="4" fill="#c07a70" opacity="0.8"/><rect x="73" y="7" width="21" height="57" fill="#f2f2f2"/><rect x="74" y="10" width="19" height="9" fill="#d6dae2" opacity="0.700"/><rect x="100" y="11" width="13.300" height="53.500" fill="#fafafa"/><rect x="101" y="15.500" width="11" height="3" fill="#b6c3ce"/><rect x="101" y="43" width="9" height="16" fill="#777" opacity="0.500"/><rect x="101" y="49" width="4" height="1.500" fill="#000"/></g></svg><span class="t" style="left:158.4px;top:1126.00px;font-size:13px;color:#5aa57d;letter-spacing:-0.066px;">&gt;&gt;5741847</span><span class="t" style="left:158.4px;top:1142.00px;font-size:13px;color:#e6e6e6;">Material Editor. Export the main texture for the nose and the face texture for your character. If you have GIMP you can use the Select by Colour Tool and</span><span class="t" style="left:158.4px;top:1157.00px;font-size:13px;color:#e6e6e6;letter-spacing:-0.041px;">the Colour Picker Tool.</span></body></html>
